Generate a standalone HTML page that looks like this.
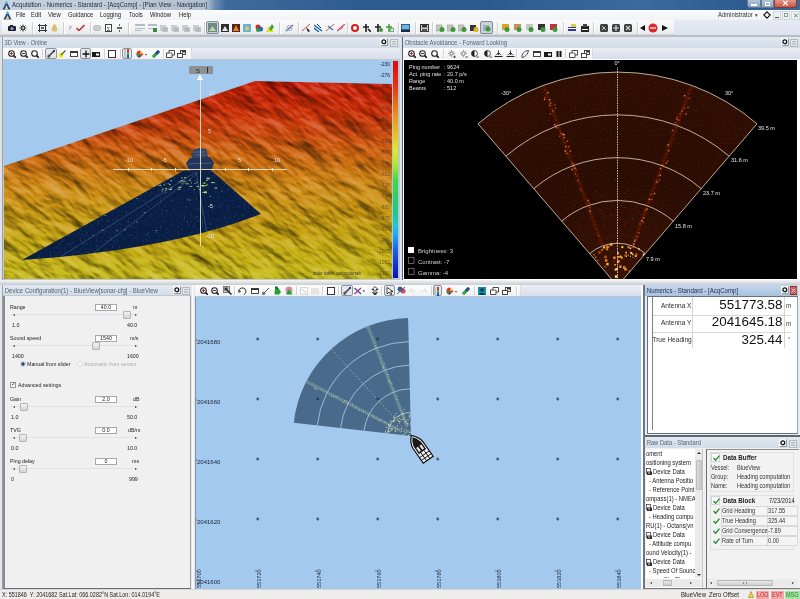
<!DOCTYPE html>
<html><head><meta charset="utf-8">
<style>
*{margin:0;padding:0;box-sizing:border-box}
html,body{width:800px;height:599px;overflow:hidden;background:#bcc3cc;font-family:"Liberation Sans",sans-serif;font-size:7px;color:#000;position:relative}
.a{position:absolute}
.t{white-space:nowrap;transform-origin:0 50%;line-height:8px}
.mn{top:11px;font-size:7px;color:#222;transform:scaleX(0.84)}
.ph{height:11px;background:linear-gradient(#e3e9f1,#d2dbe7);color:#52657b;line-height:12.5px;white-space:nowrap;overflow:hidden}
.ph span{display:inline-block;transform:scaleX(0.83);transform-origin:0 50%;padding-left:2px;font-size:7px}
.ptb{height:12px;background:linear-gradient(#eceef6,#d6dbe9)}
.tbw{height:11px;background:linear-gradient(#fdfdfd,#f0f1f3);border-right:1px solid #d8dce2}
#root{position:absolute;left:0;top:0;width:800px;height:599px;overflow:hidden;filter:blur(0.3px)}
</style></head><body><div id="root">

<!-- TITLE BAR -->
<div class="a" style="left:0;top:0;width:800px;height:10px;background:linear-gradient(90deg,#c6d2df 0%,#bccad9 15%,#b0c0d2 25.8%,#6f90b6 26.8%,#3e6a9b 28.2%,#2f5c8f 45%,#2c5a8c 60%,#3b6a9c 80%,#2e5c8f 93%,#3a6796 100%)"></div>
<svg class="a" style="left:2px;top:1px" width="9" height="9" viewBox="0 0 9 9"><path d="M0.5 8.5 L4.5 0.5 L8.5 8.5Z" fill="#1b3fa8"/><path d="M2.5 8.5 L4.5 4 L6.5 8.5Z" fill="#e8e04a"/><circle cx="4.5" cy="1.8" r="1.2" fill="#45c0c0"/></svg>
<div class="a t" style="left:12px;top:1px;font-size:7px;color:#1e2a38;transform:scaleX(0.865)">Acquisition - Numerics - Standard - [AcqComp] - [Plan View - Navigation]</div>
<div class="a" style="left:747px;top:0;width:14px;height:8px;background:linear-gradient(#b4c4d6,#8ea6c0);border:1px solid #5f7a9c;border-top:none;border-radius:0 0 0 3px"></div>
<div class="a" style="left:751px;top:4px;width:6px;height:2px;background:#fff"></div>
<div class="a" style="left:761px;top:0;width:13px;height:8px;background:linear-gradient(#b4c4d6,#8ea6c0);border:1px solid #5f7a9c;border-top:none"></div>
<div class="a" style="left:765px;top:2px;width:5px;height:4px;border:1px solid #fff"></div>
<div class="a" style="left:774px;top:0;width:23px;height:8px;background:linear-gradient(#e4968a,#c9574a);border:1px solid #8a3a32;border-top:none;border-radius:0 0 3px 0"></div>
<div class="a" style="left:782px;top:-1px;font-size:8px;font-weight:bold;color:#fff;line-height:9px">✕</div>

<!-- MENU BAR -->
<div class="a" style="left:0;top:10px;width:800px;height:10px;background:linear-gradient(#fafbfc,#f1f3f6)"></div>
<svg class="a" style="left:3px;top:11px" width="9" height="9" viewBox="0 0 9 9"><path d="M0.5 8.5 L4.5 0.5 L8.5 8.5Z" fill="#1b3fa8"/><path d="M2.5 8.5 L4.5 4 L6.5 8.5Z" fill="#e8e04a"/><circle cx="4.5" cy="1.8" r="1.2" fill="#45c0c0"/></svg>
<div class="a t mn" style="left:16px">File</div>
<div class="a t mn" style="left:31px">Edit</div>
<div class="a t mn" style="left:48px">View</div>
<div class="a t mn" style="left:68px">Guidance</div>
<div class="a t mn" style="left:100px">Logging</div>
<div class="a t mn" style="left:129px">Tools</div>
<div class="a t mn" style="left:150px">Window</div>
<div class="a t mn" style="left:179px">Help</div>
<div class="a t mn" style="left:718px;color:#333">Administrator <span style="font-size:5px">▼</span></div>
<svg class="a" style="left:763px;top:11px" width="8" height="8" viewBox="0 0 8 8"><path d="M4 0.8 L7.2 4 L4 7.2 L0.8 4Z" fill="#fff" stroke="#111" stroke-width="1.1"/></svg>
<div class="a" style="left:773px;top:11px;width:8px;height:9px;background:#eef1f4;border:1px solid #cfd6de"></div>
<div class="a" style="left:775px;top:17px;width:4px;height:1px;background:#555"></div>
<div class="a" style="left:782px;top:11px;width:8px;height:9px;background:#eef1f4;border:1px solid #cfd6de"></div>
<div class="a" style="left:784px;top:13px;width:4px;height:4px;border:1px solid #8a9"></div>
<div class="a" style="left:791px;top:11px;width:9px;height:9px;background:#eef1f4;border:1px solid #cfd6de;color:#5a8a7a;font-size:7px;line-height:7px;text-align:center">✕</div>

<!-- TOOLBAR -->
<div class="a" style="left:0;top:20px;width:800px;height:15px;background:linear-gradient(#e6eaf3,#dde2ee)"></div>
<div class="a" style="left:2px;top:20px;width:672px;height:15px;background:linear-gradient(#fbfbfb,#f2f2f2 60%,#e9eaec);border-bottom:1px solid #d4d7db"></div>
<div class="a" style="left:0;top:35px;width:800px;height:2px;background:#b9bec6"></div>

<svg class="a" style="left:8px;top:25px" width="8" height="6" viewBox="0 0 8 6"><rect x="0" y="1" width="8" height="5" rx="1" fill="#1c1f3a"/><circle cx="4" cy="3.5" r="1.6" fill="#9aa0c8"/><rect x="2" y="0" width="3" height="1.5" fill="#1c1f3a"/></svg>
<svg class="a" style="left:19px;top:24px" width="8" height="8" viewBox="0 0 8 8"><g stroke="#333" stroke-width="1"><path d="M4 0.5V7.5M0.5 4H7.5M1.5 1.5L6.5 6.5M6.5 1.5L1.5 6.5"/></g><circle cx="4" cy="4" r="1.5" fill="#eee" stroke="#333"/></svg>
<div class="a" style="left:32px;top:22px;width:1px;height:12px;background:#cdd0d4;box-shadow:1px 0 0 #fff"></div>
<svg class="a" style="left:38px;top:24px" width="9" height="8" viewBox="0 0 9 8"><g stroke="#333" stroke-width="1" fill="none"><path d="M0 1.5H9M0 6.5H9M1.5 0V8M7.5 0V8"/></g><rect x="3" y="3" width="3" height="2" fill="#5a6070"/></svg>
<svg class="a" style="left:51px;top:23px" width="7" height="9" viewBox="0 0 7 9"><path d="M3.5 0.5 L5 2.5 L6.5 6 L5.5 8.5 H1.5 L0.5 6 L2 2.5Z" fill="#d8bf7a"/></svg>
<div class="a" style="left:63px;top:22px;width:1px;height:12px;background:#cdd0d4;box-shadow:1px 0 0 #fff"></div>
<svg class="a" style="left:68px;top:25px" width="5" height="6" viewBox="0 0 5 6"><path d="M1 5 L4 1" stroke="#aab" stroke-width="1"/><circle cx="2" cy="2" r="1" fill="#bbc"/></svg>
<svg class="a" style="left:76px;top:24px" width="9" height="7" viewBox="0 0 9 7"><path d="M0.5 4 L3 6.5 L8.5 1" stroke="#c0344a" stroke-width="1.6" fill="none"/></svg>
<div class="a" style="left:90px;top:22px;width:1px;height:12px;background:#cdd0d4;box-shadow:1px 0 0 #fff"></div>
<svg class="a" style="left:93px;top:25px" width="8" height="6" viewBox="0 0 8 6"><rect x="0.5" y="0.5" width="7" height="5" rx="2" fill="#c8ccd0" stroke="#b8bcc0"/></svg>
<svg class="a" style="left:105px;top:24px" width="7" height="8" viewBox="0 0 7 8"><rect x="0.5" y="0.5" width="6" height="7" fill="#fff" stroke="#444"/><text x="3.5" y="6.5" font-size="6" text-anchor="middle" fill="#222" font-family="Liberation Serif">Σ</text></svg>
<svg class="a" style="left:117px;top:24px" width="5" height="8" viewBox="0 0 5 8"><g fill="#666"><rect x="2" y="0" width="1" height="2"/><rect x="0" y="3" width="5" height="2"/><rect x="2" y="6" width="1" height="2"/></g></svg>
<div class="a" style="left:128px;top:22px;width:1px;height:12px;background:#cdd0d4;box-shadow:1px 0 0 #fff"></div>
<svg class="a" style="left:135px;top:24px" width="10" height="8" viewBox="0 0 10 8"><g fill="#b0bccb"><rect x="0" y="0" width="10" height="2"/><rect x="0" y="4" width="10" height="1"/><rect x="0" y="6" width="7" height="1"/></g></svg>
<svg class="a" style="left:148px;top:24px" width="9" height="8" viewBox="0 0 9 8"><g fill="#b0bccb"><rect x="0" y="0" width="9" height="2"/><rect x="0" y="4" width="6" height="1"/></g><rect x="5" y="4" width="4" height="4" fill="#3b8a4a"/></svg>
<svg class="a" style="left:160px;top:24px" width="8" height="8" viewBox="0 0 8 8"><rect x="0" y="1" width="6" height="6" fill="#c8ccd0"/><rect x="2" y="3" width="6" height="5" fill="#b4b8bc" stroke="#ddd" stroke-width="0.5"/></svg>
<svg class="a" style="left:171px;top:24px" width="8" height="8" viewBox="0 0 8 8"><rect x="0" y="1" width="6" height="6" fill="#c8ccd0"/><rect x="2" y="3" width="6" height="5" fill="#b4b8bc" stroke="#ddd" stroke-width="0.5"/></svg>
<svg class="a" style="left:182px;top:24px" width="8" height="8" viewBox="0 0 8 8"><rect x="0" y="1" width="6" height="6" fill="#c8ccd0"/><rect x="2" y="3" width="6" height="5" fill="#b4b8bc" stroke="#ddd" stroke-width="0.5"/></svg>
<svg class="a" style="left:193px;top:24px" width="8" height="8" viewBox="0 0 8 8"><rect x="0" y="1" width="6" height="6" fill="#c8ccd0"/><rect x="2" y="3" width="6" height="5" fill="#b4b8bc" stroke="#ddd" stroke-width="0.5"/></svg>
<div class="a" style="left:204px;top:22px;width:1px;height:12px;background:#cdd0d4;box-shadow:1px 0 0 #fff"></div>
<div class="a" style="left:206px;top:21px;width:13px;height:13px;background:#c9d3db;border:1px solid #7f8a94;border-radius:2px"></div>
<svg class="a" style="left:208px;top:23px" width="9" height="9" viewBox="0 0 9 9"><rect x="0" y="0" width="9" height="9" fill="#6f8a7e"/><path d="M1 8 L4.5 3 L8 8Z" fill="#b8d8b0"/></svg>
<svg class="a" style="left:221px;top:24px" width="8" height="8" viewBox="0 0 8 8"><rect x="0" y="0" width="8" height="8" fill="#2a2f3a"/><path d="M1 7 L4 2 L7 7Z" fill="#e8e8d8"/></svg>
<svg class="a" style="left:232px;top:24px" width="8" height="8" viewBox="0 0 8 8"><rect x="0" y="0" width="8" height="8" fill="#5a2418"/><path d="M1 7 L4 1 L7 7Z" fill="#e8842a"/></svg>
<svg class="a" style="left:243px;top:24px" width="8" height="8" viewBox="0 0 8 8"><rect x="0" y="0" width="8" height="8" fill="#6ab0e0"/><circle cx="4" cy="4.5" r="2" fill="#e8d040"/></svg>
<svg class="a" style="left:255px;top:24px" width="8" height="8" viewBox="0 0 8 8"><circle cx="3" cy="3" r="2.5" fill="#d02828"/><circle cx="5.5" cy="5" r="2.5" fill="#2860c8"/><circle cx="3" cy="6" r="2" fill="#28a040"/></svg>
<svg class="a" style="left:266px;top:24px" width="8" height="8" viewBox="0 0 8 8"><path d="M0 8 L3 2 L8 8Z" fill="#e8e020"/><path d="M3 5 L6 0 L8 3 L5 7Z" fill="#38a838"/></svg>
<div class="a" style="left:279px;top:22px;width:1px;height:12px;background:#cdd0d4;box-shadow:1px 0 0 #fff"></div>
<svg class="a" style="left:285px;top:24px" width="9" height="8" viewBox="0 0 9 8"><path d="M1 7 L8 1" stroke="#5a70a8" stroke-width="1.5"/><circle cx="4.5" cy="4" r="2.5" fill="none" stroke="#9aa8c8"/></svg>
<div class="a" style="left:298px;top:22px;width:1px;height:12px;background:#cdd0d4;box-shadow:1px 0 0 #fff"></div>
<svg class="a" style="left:302px;top:24px" width="9" height="8" viewBox="0 0 9 8"><path d="M0 7 L8 0" stroke="#d05060" stroke-width="1"/><path d="M4 3 L8 7 L6 8Z" fill="#111"/></svg>
<svg class="a" style="left:314px;top:24px" width="9" height="8" viewBox="0 0 9 8"><path d="M0 1 L8 7M0 4 L5 8" stroke="#2a6ab0" stroke-width="1.5"/><path d="M3 0 L7 4" stroke="#1a3a80"/></svg>
<svg class="a" style="left:326px;top:24px" width="9" height="8" viewBox="0 0 9 8"><path d="M0 7 L8 0" stroke="#d05060" stroke-width="1"/><path d="M2 2 L7 6" stroke="#3a7ab8" stroke-width="1.6"/></svg>
<svg class="a" style="left:337px;top:24px" width="8" height="8" viewBox="0 0 8 8"><path d="M0 7 L8 0" stroke="#c84050" stroke-width="1.2"/><path d="M2 6 L6 3" stroke="#e07080" stroke-width="1.5"/></svg>
<div class="a" style="left:347px;top:22px;width:1px;height:12px;background:#cdd0d4;box-shadow:1px 0 0 #fff"></div>
<svg class="a" style="left:351px;top:24px" width="8" height="8" viewBox="0 0 8 8"><circle cx="4" cy="4" r="3" fill="none" stroke="#d02020" stroke-width="2"/></svg>
<svg class="a" style="left:363px;top:24px" width="8" height="8" viewBox="0 0 8 8"><path d="M3 0V8M0 3H6M5 5 L8 8" stroke="#222" stroke-width="1.6"/></svg>
<svg class="a" style="left:375px;top:24px" width="8" height="8" viewBox="0 0 8 8"><path d="M3 0V8M0 3H6" stroke="#222" stroke-width="1.6"/><circle cx="6" cy="6" r="2" fill="#3a9a3a"/></svg>
<svg class="a" style="left:386px;top:24px" width="8" height="8" viewBox="0 0 8 8"><path d="M3 0V8M0 3H6" stroke="#3a9a3a" stroke-width="1.4"/><circle cx="6" cy="6" r="2" fill="none" stroke="#3a9a3a"/></svg>
<div class="a" style="left:398px;top:22px;width:1px;height:12px;background:#cdd0d4;box-shadow:1px 0 0 #fff"></div>
<svg class="a" style="left:401px;top:24px" width="9" height="8" viewBox="0 0 9 8"><rect x="0" y="0" width="9" height="8" fill="#2a5f8f"/><rect x="1" y="1" width="7" height="4" fill="#6ab8e0"/><rect x="0" y="6" width="9" height="2" fill="#1a2a3a"/></svg>
<div class="a" style="left:415px;top:22px;width:1px;height:12px;background:#cdd0d4;box-shadow:1px 0 0 #fff"></div>
<svg class="a" style="left:420px;top:24px" width="9" height="8" viewBox="0 0 9 8"><rect x="0.5" y="0.5" width="8" height="7" fill="#d8d0c8" stroke="#333"/><rect x="2" y="0.5" width="5" height="3" fill="#333"/><rect x="2" y="5" width="5" height="2.5" fill="#555"/></svg>
<div class="a" style="left:432px;top:22px;width:1px;height:12px;background:#cdd0d4;box-shadow:1px 0 0 #fff"></div>
<svg class="a" style="left:436px;top:24px" width="9" height="8" viewBox="0 0 9 8"><rect x="0" y="1" width="6" height="6" fill="#c8c8c0" stroke="#888" stroke-width="0.5"/><circle cx="6" cy="5.5" r="2.5" fill="#3a9a3a"/></svg>
<svg class="a" style="left:447px;top:24px" width="9" height="8" viewBox="0 0 9 8"><rect x="0" y="1" width="6" height="6" fill="#c8c8c0" stroke="#888" stroke-width="0.5"/><circle cx="6" cy="5.5" r="2.5" fill="#3a9a3a"/></svg>
<svg class="a" style="left:458px;top:24px" width="9" height="8" viewBox="0 0 9 8"><rect x="0" y="1" width="6" height="6" fill="#c8c8c0" stroke="#888" stroke-width="0.5"/><circle cx="6" cy="5.5" r="2.5" fill="#3a9a3a"/></svg>
<svg class="a" style="left:470px;top:24px" width="9" height="8" viewBox="0 0 9 8"><rect x="0" y="1" width="6" height="6" fill="#333"/><circle cx="6" cy="5.5" r="2.5" fill="#e0b020"/></svg>
<svg class="a" style="left:482px;top:24px" width="9" height="8" viewBox="0 0 9 8"><rect x="0" y="1" width="6" height="6" fill="#c8c8c0" stroke="#888" stroke-width="0.5"/><circle cx="6" cy="5.5" r="2.5" fill="#3a9a3a"/></svg>
<div class="a" style="left:480px;top:21px;width:13px;height:13px;background:#c9d3db;border:1px solid #7f8a94;border-radius:2px"></div>
<svg class="a" style="left:483px;top:24px" width="8" height="8" viewBox="0 0 8 8"><rect x="0" y="1" width="6" height="6" fill="#aab"/><circle cx="5" cy="5" r="2.5" fill="#3a9a3a"/></svg>
<div class="a" style="left:497px;top:22px;width:1px;height:12px;background:#cdd0d4;box-shadow:1px 0 0 #fff"></div>
<svg class="a" style="left:502px;top:24px" width="8" height="8" viewBox="0 0 8 8"><rect x="0" y="0" width="7" height="6" fill="#e0a030"/><circle cx="5" cy="5.5" r="2.5" fill="#3a9a3a"/></svg>
<svg class="a" style="left:514px;top:24px" width="8" height="8" viewBox="0 0 8 8"><rect x="0" y="0" width="7" height="6" fill="#c09060"/><circle cx="5" cy="5.5" r="2.5" fill="#3a9a3a"/></svg>
<svg class="a" style="left:526px;top:24px" width="8" height="8" viewBox="0 0 8 8"><rect x="0" y="0" width="7" height="6" fill="#c8c8c0"/><circle cx="5" cy="5.5" r="2.5" fill="#3a9a3a"/></svg>
<svg class="a" style="left:538px;top:24px" width="8" height="8" viewBox="0 0 8 8"><rect x="0" y="0" width="7" height="6" fill="#333"/><circle cx="5" cy="5.5" r="2.5" fill="#3a9a3a"/></svg>
<svg class="a" style="left:550px;top:24px" width="8" height="8" viewBox="0 0 8 8"><rect x="0" y="0" width="7" height="6" fill="#c03040"/><circle cx="5" cy="5.5" r="2.5" fill="#3a9a3a"/></svg>
<div class="a" style="left:563px;top:22px;width:1px;height:12px;background:#cdd0d4;box-shadow:1px 0 0 #fff"></div>
<svg class="a" style="left:568px;top:24px" width="8" height="8" viewBox="0 0 8 8"><rect x="0" y="3" width="8" height="4" fill="#2a3aa8"/><rect x="0" y="4" width="8" height="1" fill="#fff"/><path d="M3 0 L8 0 L8 3 L3 3Z" fill="#e0d040"/></svg>
<svg class="a" style="left:581px;top:24px" width="8" height="8" viewBox="0 0 8 8"><rect x="0" y="2" width="8" height="6" fill="#222"/><rect x="2" y="0" width="4" height="3" fill="#444"/><rect x="1" y="5" width="6" height="1" fill="#fff"/></svg>
<div class="a" style="left:593px;top:22px;width:1px;height:12px;background:#cdd0d4;box-shadow:1px 0 0 #fff"></div>
<svg class="a" style="left:600px;top:24px" width="8" height="8" viewBox="0 0 8 8"><rect x="0" y="0" width="8" height="8" rx="1.5" fill="#3c3e42"/><path d="M2 2 L6 6M2 6 L5 3" stroke="#ccc"/></svg>
<svg class="a" style="left:612px;top:24px" width="8" height="8" viewBox="0 0 8 8"><rect x="0" y="0" width="8" height="8" rx="1.5" fill="#3c3e42"/><path d="M4 1V7M1 4H7" stroke="#ddd" stroke-width="1.2"/></svg>
<svg class="a" style="left:624px;top:24px" width="8" height="8" viewBox="0 0 8 8"><rect x="0" y="0" width="8" height="8" rx="1.5" fill="#3c3e42"/><path d="M2 2 L6 6M6 2 L2 6" stroke="#ccc" stroke-width="1.2"/></svg>
<div class="a" style="left:637px;top:22px;width:1px;height:12px;background:#cdd0d4;box-shadow:1px 0 0 #fff"></div>
<svg class="a" style="left:640px;top:25px" width="5" height="6" viewBox="0 0 5 6"><path d="M5 0 L0 3 L5 6Z" fill="#111"/></svg>
<svg class="a" style="left:648px;top:23px" width="10" height="10" viewBox="0 0 10 10"><circle cx="5" cy="5" r="4.5" fill="#d82a2a"/><rect x="2" y="4" width="6" height="2" fill="#f8a0a0"/></svg>
<svg class="a" style="left:662px;top:25px" width="6" height="6" viewBox="0 0 6 6"><path d="M0 0 L6 3 L0 6Z" fill="#111"/></svg>

<!-- frame bg -->
<div class="a" style="left:0;top:37px;width:800px;height:553px;background:#dfe2e6"></div>
<!-- 3D view panel -->
<div class="a" style="left:2px;top:37px;width:1px;height:243px;background:#98a2ae"></div>
<div class="a ph" style="left:3px;top:37px;width:397px"><span style="transform:scaleX(0.81)">3D View - Online</span></div>
<div class="a ptb" style="left:3px;top:48px;width:397px"></div><div class="a tbw" style="left:3px;top:48px;width:189px"></div>
<div class="a" style="left:3px;top:59px;width:397px;height:221px;background:#fff;border:1px solid #c4c8cc"></div>
<div class="a" style="left:402px;top:37px;width:1px;height:243px;background:#5a646e"></div>

<!-- Obstacle panel -->
<div class="a ph" style="left:403px;top:37px;width:397px"><span style="transform:scaleX(0.852)">Obstacle Avoidance - Forward Looking</span></div>
<div class="a ptb" style="left:403px;top:48px;width:397px"></div><div class="a tbw" style="left:403px;top:48px;width:190px"></div>
<div class="a" style="left:403px;top:59px;width:397px;height:221px;background:#fff"></div>
<div class="a" style="left:0;top:280px;width:800px;height:5px;background:linear-gradient(#f4f5f6,#c6cbd1)"></div>

<!-- Device config -->
<div class="a" style="left:0;top:285px;width:3px;height:305px;background:linear-gradient(90deg,#e4e6ea 0,#e4e6ea 2px,#9aa0a8 2px)"></div>
<div class="a ph" style="left:3px;top:285px;width:188px"><span style="transform:scaleX(0.865)">Device Configuration(1) - BlueView[sonar-cfg] - BlueView</span></div>
<div class="a" style="left:3px;top:295px;width:188px;height:1px;background:#c0c8d2"></div>
<div class="a" style="left:3px;top:296px;width:188px;height:293px;background:#f0f0f0;border-left:2px solid #868b92;border-right:1px solid #9aa0a6;border-bottom:1px solid #6b7076"></div>
<div class="a" style="left:191px;top:285px;width:4px;height:305px;background:linear-gradient(90deg,#dfe3e8,#fff 50%,#d8dde3)"></div>

<!-- Plan view -->
<div class="a ptb" style="left:195px;top:285px;width:446px"></div><div class="a tbw" style="left:195px;top:285px;width:326px"></div>
<div class="a" style="left:195px;top:296px;width:446px;height:293px;background:#a6caf0;border-top:1px solid #b8c4d0"></div>
<div class="a" style="left:641px;top:285px;width:2px;height:305px;background:#fff"></div>
<div class="a" style="left:643px;top:285px;width:2px;height:305px;background:#6e7680"></div>

<!-- Numerics -->
<div class="a ph" style="left:645px;top:285px;width:153px;background:linear-gradient(#c4d6ec,#a9c1de);color:#1c2c4e"><span style="transform:scaleX(0.87)">Numerics - Standard - [AcqComp]</span></div>
<div class="a" style="left:645px;top:296px;width:155px;height:139px;background:#e4f0f8"></div>
<div class="a" style="left:647px;top:296px;width:151px;height:138px;background:#fff;border-top:1px solid #6a7078;border-left:1px solid #6a7078;border-right:1px solid #98a0a8;border-bottom:1px solid #6a7078"></div>
<div class="a" style="left:652px;top:297px;width:1px;height:133px;background:#7a7f86"></div>

<!-- Raw data -->
<div class="a" style="left:645px;top:435px;width:155px;height:2px;background:#5e666e"></div>
<div class="a ph" style="left:645px;top:437px;width:155px"><span>Raw Data - Standard</span></div>
<div class="a" style="left:645px;top:448px;width:155px;height:141px;background:#f0f0f0;border-bottom:1px solid #777"></div>

<!-- status -->
<div class="a" style="left:0;top:589px;width:800px;height:1px;background:#d6d6d6"></div>
<div class="a" style="left:0;top:590px;width:800px;height:9px;background:#efecec"></div>

<svg class="a" style="left:4px;top:60px" width="395" height="219" viewBox="4 60 395 219">
<defs>
<linearGradient id="terr" gradientUnits="userSpaceOnUse" x1="300" y1="70" x2="300" y2="279">
<stop offset="0" stop-color="#c81806"/>
<stop offset="0.2" stop-color="#cc3008"/>
<stop offset="0.3" stop-color="#d04a0e"/>
<stop offset="0.4" stop-color="#d06610"/>
<stop offset="0.52" stop-color="#d08414"/>
<stop offset="0.67" stop-color="#cc9a14"/>
<stop offset="0.84" stop-color="#c8ac14"/>
<stop offset="1" stop-color="#c8bc1c"/>
</linearGradient>
<linearGradient id="cbar" x1="0" y1="0" x2="0" y2="1">
<stop offset="0" stop-color="#e00808"/>
<stop offset="0.11" stop-color="#e83010"/>
<stop offset="0.18" stop-color="#f06010"/>
<stop offset="0.25" stop-color="#f09010"/>
<stop offset="0.34" stop-color="#f0c010"/>
<stop offset="0.41" stop-color="#e8e820"/>
<stop offset="0.48" stop-color="#b0e820"/>
<stop offset="0.55" stop-color="#40d840"/>
<stop offset="0.69" stop-color="#20c880"/>
<stop offset="0.76" stop-color="#20c8d0"/>
<stop offset="0.80" stop-color="#20a8f0"/>
<stop offset="0.87" stop-color="#2060e0"/>
<stop offset="1" stop-color="#1010b0"/>
</linearGradient>
<filter id="rough" x="0" y="0" width="1" height="1" filterUnits="objectBoundingBox" color-interpolation-filters="sRGB">
<feTurbulence type="fractalNoise" baseFrequency="0.022 0.055" numOctaves="4" seed="11" result="n"/>
<feDiffuseLighting in="n" surfaceScale="3.8" diffuseConstant="0.62" lighting-color="#ffffff" result="l"><feDistantLight azimuth="250" elevation="50"/></feDiffuseLighting>
</filter>
<filter id="fanspk" x="0" y="0" width="1" height="1"><feTurbulence type="fractalNoise" baseFrequency="0.5 0.35" numOctaves="2" seed="4" result="n"/><feColorMatrix in="n" type="matrix" values="0 0 0 0 0.25  0 0 0 0 0.38  0 0 0 0 0.55  2.2 0 0 0 -1.2"/></filter>
<clipPath id="tclip"><path d="M4 166 L255 81 L392 84 L392 279 L4 279Z"/></clipPath>
</defs>
<rect x="4" y="60" width="395" height="219" fill="#a4c9ef"/>
<g clip-path="url(#tclip)"><path d="M4 166 L255 81 L392 84 L392 279 L4 279Z" fill="url(#terr)"/><g transform="rotate(36 200 180)" style="mix-blend-mode:hard-light"><rect x="-200" y="-150" width="800" height="650" filter="url(#rough)"/></g></g>
<!-- fan -->
<clipPath id="fan3c"><path d="M184 170.5 L212 171 L261 214 Q170 250 22 260Z"/></clipPath>
<path d="M184 170.5 L212 171 L261 214 Q170 250 22 260Z" fill="#091e44"/>
<g clip-path="url(#fan3c)"><rect x="20" y="168" width="245" height="95" filter="url(#fanspk)" opacity="0.3"/>
<path d="M60 257 L196 172 M92 254 L198 173" stroke="#4a6a8a" stroke-width="0.7" fill="none" opacity="0.8"/>
<path d="M196 172 L210 250" stroke="#6a8aaa" stroke-width="0.7" opacity="0.6"/>
<rect x="202.1" y="191.9" width="2" height="1" fill="#90b8a0" opacity="0.85"/>
<rect x="221.8" y="168.9" width="3" height="1" fill="#a8d060" opacity="0.85"/>
<rect x="168.9" y="183.9" width="1" height="1" fill="#c8e070" opacity="0.85"/>
<rect x="164.9" y="189.8" width="1" height="1" fill="#a8d060" opacity="0.85"/>
<rect x="189.3" y="179.8" width="1.5" height="1" fill="#c8e070" opacity="0.85"/>
<rect x="118.5" y="191.6" width="3" height="1" fill="#90b8a0" opacity="0.85"/>
<rect x="204.2" y="185.1" width="3" height="1" fill="#c8e070" opacity="0.85"/>
<rect x="154.2" y="172.6" width="1" height="1" fill="#a8d060" opacity="0.85"/>
<rect x="184.5" y="181.4" width="1" height="1" fill="#90b8a0" opacity="0.85"/>
<rect x="203.8" y="192.2" width="3" height="1" fill="#90b8a0" opacity="0.85"/>
<rect x="203.9" y="191.2" width="3" height="1" fill="#a8d060" opacity="0.85"/>
<rect x="198.0" y="185.8" width="1" height="1" fill="#c8e070" opacity="0.85"/>
<rect x="158.8" y="181.2" width="3" height="1" fill="#a8d060" opacity="0.85"/>
<rect x="178.3" y="186.8" width="3" height="1" fill="#e0f0a0" opacity="0.85"/>
<rect x="169.0" y="188.9" width="3" height="1" fill="#e0f0a0" opacity="0.85"/>
<rect x="206.7" y="183.8" width="1" height="1" fill="#c8e070" opacity="0.85"/>
<rect x="203.9" y="192.0" width="3" height="1" fill="#c8e070" opacity="0.85"/>
<rect x="157.2" y="184.4" width="1.5" height="1" fill="#e0f0a0" opacity="0.85"/>
<rect x="156.2" y="181.1" width="1.5" height="1" fill="#a8d060" opacity="0.85"/>
<rect x="155.8" y="175.9" width="2" height="1" fill="#e0f0a0" opacity="0.85"/>
<rect x="188.8" y="170.2" width="1.5" height="1" fill="#c8e070" opacity="0.85"/>
<rect x="209.4" y="195.9" width="1.5" height="1" fill="#90b8a0" opacity="0.85"/>
<rect x="161.4" y="190.4" width="1.5" height="1" fill="#90b8a0" opacity="0.85"/>
<rect x="196.4" y="182.2" width="1" height="1" fill="#e0f0a0" opacity="0.85"/>
<rect x="163.7" y="184.3" width="1.5" height="1" fill="#a8d060" opacity="0.85"/>
<rect x="189.4" y="185.9" width="3" height="1" fill="#90b8a0" opacity="0.85"/>
<rect x="202.0" y="185.7" width="2" height="1" fill="#e0f0a0" opacity="0.85"/>
<rect x="201.2" y="185.0" width="3" height="1" fill="#c8e070" opacity="0.85"/>
<rect x="206.7" y="177.7" width="1.5" height="1" fill="#a8d060" opacity="0.85"/>
<rect x="184.3" y="177.2" width="2" height="1" fill="#a8d060" opacity="0.85"/>
<rect x="211.0" y="182.1" width="3" height="1" fill="#c8e070" opacity="0.85"/>
<rect x="230.1" y="180.2" width="2" height="1" fill="#a8d060" opacity="0.85"/>
<rect x="206.9" y="178.5" width="3" height="1" fill="#90b8a0" opacity="0.85"/>
<rect x="147.6" y="178.3" width="2" height="1" fill="#a8d060" opacity="0.85"/>
<rect x="167.7" y="183.0" width="1" height="1" fill="#90b8a0" opacity="0.85"/>
<rect x="163.4" y="170.3" width="1" height="1" fill="#e0f0a0" opacity="0.85"/>
<rect x="158.7" y="179.2" width="3" height="1" fill="#e0f0a0" opacity="0.85"/>
<rect x="170.0" y="174.9" width="1.5" height="1" fill="#a8d060" opacity="0.85"/>
<rect x="198.9" y="188.7" width="1.5" height="1" fill="#c8e070" opacity="0.85"/>
<rect x="160.7" y="175.8" width="1" height="1" fill="#c8e070" opacity="0.85"/>
<rect x="178.6" y="181.4" width="2" height="1" fill="#90b8a0" opacity="0.85"/>
<rect x="169.5" y="184.2" width="1.5" height="1" fill="#a8d060" opacity="0.85"/>
<rect x="193.6" y="189.3" width="1" height="1" fill="#c8e070" opacity="0.85"/>
<rect x="185.7" y="183.3" width="3" height="1" fill="#c8e070" opacity="0.85"/>
<rect x="162.2" y="188.6" width="1.5" height="1" fill="#e0f0a0" opacity="0.85"/>
<rect x="214.2" y="182.2" width="1" height="1" fill="#a8d060" opacity="0.85"/>
<rect x="170.5" y="187.3" width="2" height="1" fill="#90b8a0" opacity="0.85"/>
<rect x="194.5" y="183.1" width="1" height="1" fill="#e0f0a0" opacity="0.85"/>
<rect x="203.6" y="182.9" width="1.5" height="1" fill="#c8e070" opacity="0.85"/>
<rect x="170.5" y="180.4" width="1.5" height="1" fill="#e0f0a0" opacity="0.85"/>
<rect x="214.5" y="187.5" width="3" height="1" fill="#c8e070" opacity="0.85"/>
<rect x="206.6" y="177.6" width="3" height="1" fill="#c8e070" opacity="0.85"/>
<rect x="170.3" y="175.5" width="3" height="1" fill="#90b8a0" opacity="0.85"/>
<rect x="191.0" y="182.4" width="1" height="1" fill="#c8e070" opacity="0.85"/>
<rect x="181.6" y="182.5" width="2" height="1" fill="#90b8a0" opacity="0.85"/>
<rect x="181.0" y="177.5" width="1.5" height="1" fill="#90b8a0" opacity="0.85"/>
<rect x="165.9" y="188.6" width="1" height="1" fill="#c8e070" opacity="0.85"/>
<rect x="159.6" y="184.9" width="1.5" height="1" fill="#90b8a0" opacity="0.85"/>
<rect x="159.1" y="176.8" width="2" height="1" fill="#a8d060" opacity="0.85"/>
<rect x="159.3" y="184.8" width="2" height="1" fill="#90b8a0" opacity="0.85"/>
<rect x="210.7" y="170.2" width="1" height="1" fill="#a8d060" opacity="0.85"/>
<rect x="177.7" y="188.8" width="3" height="1" fill="#a8d060" opacity="0.85"/>
<rect x="196.5" y="186.0" width="2" height="1" fill="#90b8a0" opacity="0.85"/>
<rect x="183.8" y="177.3" width="1" height="1" fill="#a8d060" opacity="0.85"/>
<rect x="180.7" y="180.1" width="2" height="1" fill="#e0f0a0" opacity="0.85"/>
<rect x="164.0" y="176.9" width="2" height="1" fill="#c8e070" opacity="0.85"/>
<rect x="203.5" y="182.4" width="2" height="1" fill="#a8d060" opacity="0.85"/>
<rect x="206.1" y="179.8" width="1.5" height="1" fill="#e0f0a0" opacity="0.85"/>
<rect x="182.3" y="180.6" width="3" height="1" fill="#90b8a0" opacity="0.85"/>
<rect x="165.1" y="187.9" width="2" height="1" fill="#a8d060" opacity="0.85"/>
<rect x="186.8" y="221.1" width="1" height="1" fill="#8ab0c8" opacity="0.6"/>
<rect x="110.2" y="238.0" width="1" height="1" fill="#8ab0c8" opacity="0.6"/>
<rect x="136.1" y="221.5" width="2" height="1" fill="#8ab0c8" opacity="0.6"/>
<rect x="83.0" y="215.1" width="1" height="1" fill="#8ab0c8" opacity="0.6"/>
<rect x="143.7" y="212.1" width="2" height="1" fill="#8ab0c8" opacity="0.6"/>
<rect x="118.4" y="190.4" width="1" height="1" fill="#8ab0c8" opacity="0.6"/>
<rect x="95.1" y="205.4" width="2" height="1" fill="#8ab0c8" opacity="0.6"/>
<rect x="139.3" y="190.1" width="1" height="1" fill="#8ab0c8" opacity="0.6"/>
<rect x="101.6" y="229.6" width="2" height="1" fill="#8ab0c8" opacity="0.6"/>
<rect x="164.7" y="192.5" width="1" height="1" fill="#8ab0c8" opacity="0.6"/>
<rect x="146.7" y="234.1" width="1" height="1" fill="#8ab0c8" opacity="0.6"/>
<rect x="116.0" y="230.1" width="2" height="1" fill="#8ab0c8" opacity="0.6"/>
<rect x="221.4" y="190.9" width="1" height="1" fill="#8ab0c8" opacity="0.6"/>
<rect x="92.9" y="235.0" width="1" height="1" fill="#8ab0c8" opacity="0.6"/>
<rect x="104.3" y="214.9" width="2" height="1" fill="#8ab0c8" opacity="0.6"/>
<rect x="155.4" y="230.0" width="2" height="1" fill="#8ab0c8" opacity="0.6"/>
<rect x="104.4" y="197.7" width="2" height="1" fill="#8ab0c8" opacity="0.6"/>
<rect x="127.7" y="221.4" width="1" height="1" fill="#8ab0c8" opacity="0.6"/>
<rect x="186.9" y="199.3" width="1" height="1" fill="#8ab0c8" opacity="0.6"/>
<rect x="188.5" y="199.5" width="2" height="1" fill="#8ab0c8" opacity="0.6"/>
<rect x="136.4" y="198.1" width="2" height="1" fill="#8ab0c8" opacity="0.6"/>
<rect x="124.0" y="229.5" width="2" height="1" fill="#8ab0c8" opacity="0.6"/>
<rect x="105.3" y="195.2" width="2" height="1" fill="#8ab0c8" opacity="0.6"/>
<rect x="166.2" y="210.4" width="1" height="1" fill="#8ab0c8" opacity="0.6"/>
<rect x="196.5" y="216.2" width="1" height="1" fill="#8ab0c8" opacity="0.6"/>
</g>
<!-- boat -->
<path d="M186 163 L190 158 L210 157 L214 163 L211 171 L190 172Z" fill="#22345a"/>
<path d="M192 158 L193 150 L199 148 L206 149 L208 157Z" fill="#2e4468"/>
<path d="M194 152 L205 152 M195 155 L206 155" stroke="#5a7498" stroke-width="0.8"/>
<path d="M188 164 L212 163" stroke="#4a6088" stroke-width="0.9"/>
<path d="M190 171 L211 170" stroke="#0c1a34" stroke-width="1.2"/>
<!-- axes -->
<path d="M113 169.5 H287 M200.5 78 V246" stroke="#ece6c8" stroke-width="1" opacity="0.9"/><g fill="#f4f0d8"><rect x="128" y="168" width="1" height="3"/><rect x="151" y="168" width="1" height="3"/><rect x="175" y="168" width="1" height="3"/><rect x="225" y="168" width="1" height="3"/><rect x="248" y="168" width="1" height="3"/><rect x="272" y="168" width="1" height="3"/></g>
<path d="M197 80 L200 74 L203 80Z" fill="#fff"/>
<rect x="189" y="66" width="24" height="8" rx="1" fill="#8d9196"/>
<text x="196" y="72.5" font-size="6" fill="#222">S</text><rect x="207" y="67" width="1" height="6" fill="#333"/>
<g font-size="5.5" fill="#e8e8e8" font-family="Liberation Sans"><text x="125" y="162">-10</text><text x="162" y="162">-5</text><text x="238" y="162">5</text><text x="274" y="162">10</text><text x="208" y="133">5</text><text x="209" y="95">10</text><text x="208" y="208">-5</text><text x="206" y="238">-10</text></g>
<!-- color bar -->
<rect x="393" y="61" width="5" height="217" fill="url(#cbar)"/>
<g font-size="5" fill="#223" text-anchor="end" font-family="Liberation Sans"><text x="390" y="66">-230</text><text x="390" y="77">-276</text></g>
<g font-size="5" fill="#432" text-anchor="end" font-family="Liberation Sans" opacity="0.7"><text x="390" y="88">-322</text><text x="390" y="99">-369</text><text x="390" y="110">-415</text><text x="390" y="121">-461</text><text x="390" y="132">-507</text><text x="390" y="143">-553</text><text x="390" y="154">-599</text><text x="390" y="165">-645</text><text x="390" y="176">-692</text><text x="390" y="187">-738</text><text x="390" y="198">-784</text><text x="390" y="209">-830</text><text x="390" y="220">-876</text><text x="390" y="231">-924</text><text x="390" y="242">-969</text><text x="390" y="253">-1015</text><text x="390" y="264">-1062</text><text x="390" y="275">-1155</text></g>
<text x="313" y="275" font-size="4.5" fill="#333" font-family="Liberation Sans">color table: autocolortab</text>
</svg>

<svg class="a" style="left:404px;top:60px" width="393" height="219" viewBox="404 60 393 219">
<defs><radialGradient id="fanfill" gradientUnits="userSpaceOnUse" cx="617.5" cy="286" r="214"><stop offset="0" stop-color="#3a1204"/><stop offset="0.5" stop-color="#2a0c03"/><stop offset="1" stop-color="#2e0d03"/></radialGradient>
<filter id="spk" x="0" y="0" width="1" height="1"><feTurbulence type="fractalNoise" baseFrequency="0.6" numOctaves="1" seed="5" result="n"/><feColorMatrix in="n" type="matrix" values="0 0 0 0 0.6  0 0 0 0 0.25  0 0 0 0 0.05  3 0 0 0 -1.7"/></filter>
<clipPath id="fanclip"><path d="M617.5 286.0 L478.0 123.8 A214.0 214.0 0 0 1 757.0 123.8Z"/></clipPath></defs>
<rect x="404" y="60" width="393" height="219" fill="#000"/>
<path d="M617.5 286.0 L478.0 123.8 A214.0 214.0 0 0 1 757.0 123.8Z" fill="url(#fanfill)"/>
<g clip-path="url(#fanclip)">
<rect x="404" y="60" width="393" height="219" filter="url(#spk)" opacity="0.18"/>
<line x1="603.6" y1="248.5" x2="543.3" y2="85.3" stroke="#5a1604" stroke-width="5" opacity="0.4"/>
<line x1="603.6" y1="248.5" x2="543.3" y2="85.3" stroke="#b03810" stroke-width="1.6" opacity="0.35" stroke-dasharray="2 2"/>
<rect x="589.4" y="210.6" width="1.5" height="1.5" fill="#f0a060" opacity="0.8"/>
<rect x="549.8" y="102.4" width="1.5" height="1.5" fill="#e07030" opacity="0.8"/>
<rect x="565.6" y="152.8" width="1.5" height="1.5" fill="#c04010" opacity="0.8"/>
<rect x="589.2" y="206.8" width="1.5" height="1.5" fill="#c04010" opacity="0.8"/>
<rect x="571.5" y="162.3" width="1.5" height="1.5" fill="#c04010" opacity="0.8"/>
<rect x="568.0" y="145.9" width="1.5" height="1.5" fill="#d05020" opacity="0.8"/>
<rect x="552.3" y="110.1" width="1.5" height="1.5" fill="#e07030" opacity="0.8"/>
<rect x="566.7" y="140.5" width="1.5" height="1.5" fill="#e07030" opacity="0.8"/>
<rect x="587.5" y="199.8" width="1.5" height="1.5" fill="#f0a060" opacity="0.8"/>
<rect x="574.7" y="173.5" width="1.5" height="1.5" fill="#c04010" opacity="0.8"/>
<rect x="558.8" y="135.6" width="1.5" height="1.5" fill="#c04010" opacity="0.8"/>
<rect x="560.2" y="132.6" width="1.5" height="1.5" fill="#d05020" opacity="0.8"/>
<rect x="554.8" y="107.3" width="1.5" height="1.5" fill="#d05020" opacity="0.8"/>
<rect x="575.6" y="169.1" width="1.5" height="1.5" fill="#c04010" opacity="0.8"/>
<rect x="555.3" y="125.2" width="1.5" height="1.5" fill="#c04010" opacity="0.8"/>
<rect x="574.3" y="167.4" width="1.5" height="1.5" fill="#f0a060" opacity="0.8"/>
<rect x="572.6" y="163.2" width="1.5" height="1.5" fill="#d05020" opacity="0.8"/>
<rect x="548.9" y="104.8" width="1.5" height="1.5" fill="#e07030" opacity="0.8"/>
<rect x="549.5" y="113.3" width="1.5" height="1.5" fill="#d05020" opacity="0.8"/>
<rect x="563.5" y="136.7" width="1.5" height="1.5" fill="#e07030" opacity="0.8"/>
<rect x="563.4" y="134.0" width="1.5" height="1.5" fill="#f0a060" opacity="0.8"/>
<rect x="588.3" y="202.5" width="1.5" height="1.5" fill="#c04010" opacity="0.8"/>
<rect x="597.8" y="234.6" width="1.5" height="1.5" fill="#c04010" opacity="0.8"/>
<rect x="554.4" y="104.1" width="1.5" height="1.5" fill="#c04010" opacity="0.8"/>
<rect x="555.8" y="126.9" width="1.5" height="1.5" fill="#e07030" opacity="0.8"/>
<rect x="566.5" y="152.6" width="1.5" height="1.5" fill="#c04010" opacity="0.8"/>
<rect x="562.3" y="133.5" width="1.5" height="1.5" fill="#f0a060" opacity="0.8"/>
<rect x="571.4" y="168.8" width="1.5" height="1.5" fill="#f0a060" opacity="0.8"/>
<rect x="603.8" y="247.1" width="1.5" height="1.5" fill="#e07030" opacity="0.8"/>
<rect x="543.9" y="98.6" width="1.5" height="1.5" fill="#f0a060" opacity="0.8"/>
<rect x="569.6" y="150.4" width="1.5" height="1.5" fill="#e07030" opacity="0.8"/>
<rect x="547.1" y="91.8" width="1.5" height="1.5" fill="#f0a060" opacity="0.8"/>
<rect x="543.9" y="96.8" width="1.5" height="1.5" fill="#c04010" opacity="0.8"/>
<rect x="579.9" y="189.0" width="1.5" height="1.5" fill="#c04010" opacity="0.8"/>
<rect x="565.1" y="146.0" width="1.5" height="1.5" fill="#e07030" opacity="0.8"/>
<rect x="564.5" y="150.6" width="1.5" height="1.5" fill="#f0a060" opacity="0.8"/>
<rect x="577.2" y="180.1" width="1.5" height="1.5" fill="#d05020" opacity="0.8"/>
<rect x="548.9" y="99.0" width="1.5" height="1.5" fill="#f0a060" opacity="0.8"/>
<rect x="572.6" y="165.5" width="1.5" height="1.5" fill="#e07030" opacity="0.8"/>
<rect x="553.8" y="124.0" width="1.5" height="1.5" fill="#f0a060" opacity="0.8"/>
<line x1="631.4" y1="248.5" x2="691.7" y2="85.3" stroke="#5a1604" stroke-width="5" opacity="0.4"/>
<line x1="631.4" y1="248.5" x2="691.7" y2="85.3" stroke="#b03810" stroke-width="1.6" opacity="0.35" stroke-dasharray="2 2"/>
<rect x="632.8" y="245.4" width="1.5" height="1.5" fill="#d05020" opacity="0.8"/>
<rect x="635.2" y="239.0" width="1.5" height="1.5" fill="#c04010" opacity="0.8"/>
<rect x="653.8" y="192.8" width="1.5" height="1.5" fill="#f0a060" opacity="0.8"/>
<rect x="671.8" y="129.7" width="1.5" height="1.5" fill="#e07030" opacity="0.8"/>
<rect x="683.9" y="94.9" width="1.5" height="1.5" fill="#f0a060" opacity="0.8"/>
<rect x="646.0" y="208.4" width="1.5" height="1.5" fill="#f0a060" opacity="0.8"/>
<rect x="641.0" y="219.9" width="1.5" height="1.5" fill="#f0a060" opacity="0.8"/>
<rect x="679.4" y="113.3" width="1.5" height="1.5" fill="#c04010" opacity="0.8"/>
<rect x="638.3" y="232.0" width="1.5" height="1.5" fill="#d05020" opacity="0.8"/>
<rect x="648.6" y="198.7" width="1.5" height="1.5" fill="#f0a060" opacity="0.8"/>
<rect x="644.5" y="210.1" width="1.5" height="1.5" fill="#c04010" opacity="0.8"/>
<rect x="667.3" y="144.1" width="1.5" height="1.5" fill="#f0a060" opacity="0.8"/>
<rect x="688.7" y="97.7" width="1.5" height="1.5" fill="#d05020" opacity="0.8"/>
<rect x="658.8" y="179.2" width="1.5" height="1.5" fill="#d05020" opacity="0.8"/>
<rect x="636.6" y="235.9" width="1.5" height="1.5" fill="#d05020" opacity="0.8"/>
<rect x="683.2" y="107.3" width="1.5" height="1.5" fill="#d05020" opacity="0.8"/>
<rect x="674.6" y="121.9" width="1.5" height="1.5" fill="#d05020" opacity="0.8"/>
<rect x="651.2" y="198.7" width="1.5" height="1.5" fill="#d05020" opacity="0.8"/>
<rect x="681.1" y="110.3" width="1.5" height="1.5" fill="#e07030" opacity="0.8"/>
<rect x="677.9" y="119.5" width="1.5" height="1.5" fill="#d05020" opacity="0.8"/>
<rect x="656.3" y="181.3" width="1.5" height="1.5" fill="#f0a060" opacity="0.8"/>
<rect x="659.4" y="174.6" width="1.5" height="1.5" fill="#f0a060" opacity="0.8"/>
<rect x="655.7" y="181.4" width="1.5" height="1.5" fill="#c04010" opacity="0.8"/>
<rect x="639.3" y="223.1" width="1.5" height="1.5" fill="#c04010" opacity="0.8"/>
<rect x="666.9" y="160.4" width="1.5" height="1.5" fill="#d05020" opacity="0.8"/>
<rect x="633.2" y="243.3" width="1.5" height="1.5" fill="#f0a060" opacity="0.8"/>
<rect x="665.5" y="162.5" width="1.5" height="1.5" fill="#e07030" opacity="0.8"/>
<rect x="685.4" y="113.0" width="1.5" height="1.5" fill="#e07030" opacity="0.8"/>
<rect x="676.0" y="118.2" width="1.5" height="1.5" fill="#d05020" opacity="0.8"/>
<rect x="687.3" y="106.7" width="1.5" height="1.5" fill="#e07030" opacity="0.8"/>
<rect x="632.6" y="246.5" width="1.5" height="1.5" fill="#d05020" opacity="0.8"/>
<rect x="659.8" y="167.8" width="1.5" height="1.5" fill="#e07030" opacity="0.8"/>
<rect x="661.9" y="164.6" width="1.5" height="1.5" fill="#e07030" opacity="0.8"/>
<rect x="650.6" y="193.7" width="1.5" height="1.5" fill="#c04010" opacity="0.8"/>
<rect x="676.2" y="118.0" width="1.5" height="1.5" fill="#d05020" opacity="0.8"/>
<rect x="643.1" y="217.1" width="1.5" height="1.5" fill="#e07030" opacity="0.8"/>
<rect x="642.3" y="221.5" width="1.5" height="1.5" fill="#d05020" opacity="0.8"/>
<rect x="676.5" y="115.9" width="1.5" height="1.5" fill="#c04010" opacity="0.8"/>
<rect x="633.9" y="240.4" width="1.5" height="1.5" fill="#f0a060" opacity="0.8"/>
<rect x="667.9" y="150.0" width="1.5" height="1.5" fill="#e07030" opacity="0.8"/>
<rect x="630.0" y="255.7" width="1" height="1" fill="#ffd040"/>
<rect x="593.6" y="254.3" width="1" height="1" fill="#ffd040"/>
<rect x="597.2" y="260.0" width="1" height="1" fill="#e09030"/>
<rect x="617.0" y="252.2" width="2" height="2" fill="#ffb020"/>
<rect x="614.6" y="268.6" width="2" height="2" fill="#ffe080"/>
<rect x="604.9" y="259.2" width="2.5" height="2.5" fill="#f08020"/>
<rect x="619.1" y="265.4" width="2.5" height="2.5" fill="#e09030"/>
<rect x="621.3" y="246.1" width="2" height="2" fill="#ffd040"/>
<rect x="624.4" y="254.3" width="2.5" height="2.5" fill="#c05010"/>
<rect x="595.3" y="256.7" width="1" height="1" fill="#ffe080"/>
<rect x="617.3" y="256.0" width="2" height="2" fill="#e09030"/>
<rect x="626.0" y="255.8" width="1" height="1" fill="#ffe080"/>
<rect x="618.8" y="260.2" width="1" height="1" fill="#e09030"/>
<rect x="602.1" y="248.8" width="1" height="1" fill="#ffb020"/>
<rect x="609.9" y="243.8" width="2" height="2" fill="#c05010"/>
<rect x="623.0" y="266.2" width="2.5" height="2.5" fill="#e09030"/>
<rect x="629.7" y="250.6" width="1" height="1" fill="#c05010"/>
<rect x="629.7" y="247.5" width="1.5" height="1.5" fill="#ffe080"/>
<rect x="613.5" y="260.8" width="1" height="1" fill="#c05010"/>
<rect x="625.4" y="251.8" width="1.5" height="1.5" fill="#ffe080"/>
<rect x="608.4" y="246.4" width="1" height="1" fill="#ffd040"/>
<rect x="627.5" y="246.2" width="2" height="2" fill="#e09030"/>
<rect x="632.1" y="253.7" width="1.5" height="1.5" fill="#ffd040"/>
<rect x="624.3" y="267.5" width="1" height="1" fill="#c05010"/>
<rect x="634.9" y="256.0" width="1" height="1" fill="#ffb020"/>
<rect x="606.2" y="262.9" width="2.5" height="2.5" fill="#ffb020"/>
<rect x="630.3" y="252.1" width="2" height="2" fill="#ffe080"/>
<rect x="613.1" y="256.5" width="2.5" height="2.5" fill="#f08020"/>
<rect x="609.9" y="243.3" width="2.5" height="2.5" fill="#ffb020"/>
<rect x="642.8" y="253.6" width="2.5" height="2.5" fill="#ffe080"/>
<rect x="614.4" y="264.0" width="1.5" height="1.5" fill="#ffb020"/>
<rect x="624.1" y="268.0" width="2.5" height="2.5" fill="#e09030"/>
<rect x="634.8" y="254.9" width="2" height="2" fill="#ffb020"/>
<rect x="598.6" y="251.6" width="2" height="2" fill="#c05010"/>
<rect x="638.0" y="248.4" width="2" height="2" fill="#c05010"/>
<rect x="635.6" y="253.2" width="2" height="2" fill="#c05010"/>
<rect x="606.2" y="245.6" width="2.5" height="2.5" fill="#f08020"/>
<rect x="600.9" y="249.3" width="2" height="2" fill="#c05010"/>
<rect x="616.9" y="260.4" width="2.5" height="2.5" fill="#ffb020"/>
<rect x="616.2" y="242.2" width="1.5" height="1.5" fill="#c05010"/>
<rect x="632.4" y="257.0" width="1" height="1" fill="#e09030"/>
<rect x="627.7" y="254.6" width="1" height="1" fill="#ffe080"/>
<rect x="605.3" y="255.8" width="1" height="1" fill="#ffb020"/>
<rect x="638.3" y="248.1" width="1.5" height="1.5" fill="#ffb020"/>
<rect x="597.9" y="251.4" width="1" height="1" fill="#c05010"/>
<rect x="603.1" y="246.4" width="2" height="2" fill="#ffd040"/>
<rect x="604.6" y="266.4" width="1" height="1" fill="#ffd040"/>
<rect x="626.2" y="269.1" width="1" height="1" fill="#f08020"/>
<rect x="620.9" y="256.7" width="2" height="2" fill="#e09030"/>
<rect x="614.9" y="275.3" width="2.5" height="2.5" fill="#ffe080"/>
<rect x="604.3" y="255.7" width="2.5" height="2.5" fill="#c05010"/>
<rect x="619.4" y="255.6" width="2" height="2" fill="#ffd040"/>
<rect x="615.8" y="268.1" width="2" height="2" fill="#ffe080"/>
<rect x="628.8" y="270.4" width="2" height="2" fill="#f08020"/>
<rect x="606.2" y="248.3" width="2" height="2" fill="#e09030"/>
<rect x="629.5" y="235.4" width="1" height="1" fill="#802808"/>
<rect x="619.8" y="219.0" width="1" height="1" fill="#802808"/>
<rect x="624.4" y="207.1" width="1" height="1" fill="#802808"/>
<rect x="599.7" y="210.0" width="1" height="1" fill="#802808"/>
<rect x="625.1" y="222.3" width="1" height="1" fill="#802808"/>
<rect x="624.6" y="193.0" width="1" height="1" fill="#802808"/>
<rect x="600.6" y="195.1" width="1" height="1" fill="#802808"/>
<rect x="632.6" y="218.6" width="1" height="1" fill="#802808"/>
<rect x="602.3" y="213.0" width="1" height="1" fill="#802808"/>
<rect x="635.3" y="206.6" width="1" height="1" fill="#802808"/>
<rect x="624.3" y="199.3" width="1" height="1" fill="#802808"/>
<rect x="610.0" y="214.1" width="1" height="1" fill="#802808"/>
<rect x="617.0" y="228.9" width="1" height="1" fill="#802808"/>
<rect x="627.8" y="190.7" width="1" height="1" fill="#802808"/>
<rect x="608.9" y="234.7" width="1" height="1" fill="#802808"/>
<rect x="620.7" y="205.1" width="1" height="1" fill="#802808"/>
<rect x="602.8" y="217.1" width="1" height="1" fill="#802808"/>
<rect x="603.0" y="225.1" width="1" height="1" fill="#802808"/>
<rect x="616.9" y="232.1" width="1" height="1" fill="#802808"/>
<rect x="623.9" y="223.7" width="1" height="1" fill="#802808"/>
<rect x="632.8" y="209.1" width="1" height="1" fill="#802808"/>
<rect x="614.6" y="179.6" width="1" height="1" fill="#802808"/>
<rect x="595.7" y="190.9" width="1" height="1" fill="#802808"/>
<rect x="637.4" y="211.2" width="1" height="1" fill="#802808"/>
<rect x="620.1" y="231.2" width="1" height="1" fill="#802808"/>
</g>
<path d="M589.6 253.6 A42.8 42.8 0 0 1 645.4 253.6" fill="none" stroke="#d0bcae" stroke-width="0.9"/>
<path d="M561.7 221.1 A85.6 85.6 0 0 1 673.3 221.1" fill="none" stroke="#d0bcae" stroke-width="0.9"/>
<path d="M533.8 188.7 A128.4 128.4 0 0 1 701.2 188.7" fill="none" stroke="#d0bcae" stroke-width="0.9"/>
<path d="M505.9 156.2 A171.2 171.2 0 0 1 729.1 156.2" fill="none" stroke="#d0bcae" stroke-width="0.9"/>
<path d="M478.0 123.8 A214.0 214.0 0 0 1 757.0 123.8" fill="none" stroke="#d0bcae" stroke-width="0.9"/>
<path d="M478.0 123.8 L617.5 286.0 L757.0 123.8" fill="none" stroke="#d0bcae" stroke-width="0.9"/>
<line x1="617.5" y1="286.0" x2="617.5" y2="67" stroke="#e0c8b8" stroke-width="0.9" stroke-dasharray="1.6 1"/>
<g font-family="Liberation Sans" font-size="5.5" fill="#e8e8e8">
<text x="614.5" y="65">0°</text><text x="501" y="95">-30°</text><text x="725" y="95">30°</text>
<text x="758" y="130">39.5 m</text>
<text x="731" y="162">31.6 m</text>
<text x="703" y="195">23.7 m</text>
<text x="675" y="228">15.8 m</text>
<text x="646" y="261">7.9 m</text>
</g>
<g font-family="Liberation Sans" font-size="5.5" fill="#e0e0e0">
<text x="409" y="69">Ping number</text><text x="444" y="69">: 9624</text>
<text x="409" y="76">Act. ping rate</text><text x="444" y="76">: 20.7 p/s</text>
<text x="409" y="83">Range</text><text x="444" y="83">: 40.0 m</text>
<text x="409" y="90">Beams</text><text x="444" y="90">: 512</text>
</g>
<rect x="408" y="247" width="6" height="6" fill="#fff"/><rect x="408.5" y="257.5" width="5.5" height="6" fill="none" stroke="#777" stroke-width="0.8"/><rect x="408.5" y="268.5" width="5.5" height="6" fill="none" stroke="#777" stroke-width="0.8"/>
<g font-family="Liberation Sans" font-size="6" fill="#d0d0d0"><text x="418" y="253">Brightness: 3</text><text x="418" y="263.5">Contrast: -7</text><text x="418" y="274.5">Gamma: -4</text></g>
</svg>

<svg class="a" style="left:195px;top:297px" width="446" height="292" viewBox="195 297 446 292">
<defs><clipPath id="pfc"><path d="M411.0 436.0 L293.7 422.8 A118.0 118.0 0 0 1 408.1 318.0Z"/></clipPath></defs>
<rect x="195" y="297" width="446" height="292" fill="#a4c9ef"/>
<path d="M411.0 436.0 L293.7 422.8 A118.0 118.0 0 0 1 408.1 318.0Z" fill="#4a6a8c"/>
<g clip-path="url(#pfc)">
<line x1="402.1" y1="431.4" x2="306.3" y2="381.5" stroke="#7a98a8" stroke-width="4" opacity="0.35"/>
<line x1="402.1" y1="431.4" x2="306.3" y2="381.5" stroke="#c8d89a" stroke-width="2.2" stroke-dasharray="1.2 1.2" opacity="0.4"/>
<rect x="355.2" y="407.3" width="1" height="1" fill="#d0dca0" opacity="0.7"/>
<rect x="385.2" y="422.1" width="1" height="1" fill="#d0dca0" opacity="0.7"/>
<rect x="397.1" y="428.8" width="1" height="1" fill="#d0dca0" opacity="0.7"/>
<rect x="314.8" y="388.0" width="1" height="1" fill="#d0dca0" opacity="0.7"/>
<rect x="347.2" y="402.4" width="1" height="1" fill="#d0dca0" opacity="0.7"/>
<rect x="393.9" y="427.2" width="1" height="1" fill="#d0dca0" opacity="0.7"/>
<rect x="333.3" y="395.8" width="1" height="1" fill="#d0dca0" opacity="0.7"/>
<rect x="330.9" y="395.7" width="1" height="1" fill="#d0dca0" opacity="0.7"/>
<rect x="375.7" y="418.3" width="1" height="1" fill="#d0dca0" opacity="0.7"/>
<rect x="352.0" y="403.9" width="1" height="1" fill="#d0dca0" opacity="0.7"/>
<rect x="344.2" y="400.2" width="1" height="1" fill="#d0dca0" opacity="0.7"/>
<rect x="362.9" y="410.3" width="1" height="1" fill="#d0dca0" opacity="0.7"/>
<rect x="388.3" y="424.4" width="1" height="1" fill="#d0dca0" opacity="0.7"/>
<rect x="336.5" y="396.3" width="1" height="1" fill="#d0dca0" opacity="0.7"/>
<rect x="358.7" y="409.9" width="1" height="1" fill="#d0dca0" opacity="0.7"/>
<rect x="373.1" y="416.8" width="1" height="1" fill="#d0dca0" opacity="0.7"/>
<rect x="372.3" y="415.2" width="1" height="1" fill="#d0dca0" opacity="0.7"/>
<rect x="379.7" y="419.1" width="1" height="1" fill="#d0dca0" opacity="0.7"/>
<rect x="316.5" y="389.0" width="1" height="1" fill="#d0dca0" opacity="0.7"/>
<rect x="363.1" y="411.1" width="1" height="1" fill="#d0dca0" opacity="0.7"/>
<rect x="395.5" y="428.0" width="1" height="1" fill="#d0dca0" opacity="0.7"/>
<rect x="314.1" y="387.5" width="1" height="1" fill="#d0dca0" opacity="0.7"/>
<rect x="342.6" y="401.8" width="1" height="1" fill="#d0dca0" opacity="0.7"/>
<rect x="345.4" y="400.5" width="1" height="1" fill="#d0dca0" opacity="0.7"/>
<rect x="378.8" y="420.1" width="1" height="1" fill="#d0dca0" opacity="0.7"/>
<line x1="407.3" y1="426.7" x2="367.8" y2="326.2" stroke="#7a98a8" stroke-width="4" opacity="0.35"/>
<line x1="407.3" y1="426.7" x2="367.8" y2="326.2" stroke="#c8d89a" stroke-width="2.0" stroke-dasharray="1.2 1.2" opacity="0.4"/>
<rect x="402.4" y="414.0" width="1" height="1" fill="#d0dca0" opacity="0.7"/>
<rect x="404.6" y="420.5" width="1" height="1" fill="#d0dca0" opacity="0.7"/>
<rect x="387.8" y="374.0" width="1" height="1" fill="#d0dca0" opacity="0.7"/>
<rect x="389.4" y="381.9" width="1" height="1" fill="#d0dca0" opacity="0.7"/>
<rect x="380.1" y="361.3" width="1" height="1" fill="#d0dca0" opacity="0.7"/>
<rect x="382.7" y="366.9" width="1" height="1" fill="#d0dca0" opacity="0.7"/>
<rect x="383.9" y="363.2" width="1" height="1" fill="#d0dca0" opacity="0.7"/>
<rect x="403.5" y="416.8" width="1" height="1" fill="#d0dca0" opacity="0.7"/>
<rect x="381.6" y="364.4" width="1" height="1" fill="#d0dca0" opacity="0.7"/>
<rect x="396.2" y="396.0" width="1" height="1" fill="#d0dca0" opacity="0.7"/>
<rect x="366.1" y="327.1" width="1" height="1" fill="#d0dca0" opacity="0.7"/>
<rect x="380.4" y="353.8" width="1" height="1" fill="#d0dca0" opacity="0.7"/>
<rect x="396.7" y="399.3" width="1" height="1" fill="#d0dca0" opacity="0.7"/>
<rect x="403.8" y="418.0" width="1" height="1" fill="#d0dca0" opacity="0.7"/>
<rect x="380.4" y="357.3" width="1" height="1" fill="#d0dca0" opacity="0.7"/>
<rect x="374.7" y="348.4" width="1" height="1" fill="#d0dca0" opacity="0.7"/>
<rect x="393.1" y="388.5" width="1" height="1" fill="#d0dca0" opacity="0.7"/>
<rect x="383.3" y="366.1" width="1" height="1" fill="#d0dca0" opacity="0.7"/>
<rect x="391.4" y="383.1" width="1" height="1" fill="#d0dca0" opacity="0.7"/>
<rect x="382.4" y="367.6" width="1" height="1" fill="#d0dca0" opacity="0.7"/>
<rect x="374.7" y="345.7" width="1" height="1" fill="#d0dca0" opacity="0.7"/>
<rect x="388.5" y="380.8" width="1" height="1" fill="#d0dca0" opacity="0.7"/>
<rect x="388.3" y="379.7" width="1" height="1" fill="#d0dca0" opacity="0.7"/>
<rect x="402.3" y="413.5" width="1" height="1" fill="#d0dca0" opacity="0.7"/>
<rect x="401.9" y="412.1" width="1" height="1" fill="#d0dca0" opacity="0.7"/>
<line x1="411.0" y1="436.0" x2="331.3" y2="349.0" stroke="#9ab0c0" stroke-width="0.8" stroke-dasharray="2 2"/>
<rect x="409.5" y="431.8" width="1" height="1" fill="#d8e890"/>
<rect x="393.9" y="417.5" width="1" height="1" fill="#d8e890"/>
<rect x="390.0" y="425.4" width="1" height="1" fill="#d8e890"/>
<rect x="392.9" y="420.1" width="1" height="1" fill="#d8e890"/>
<rect x="410.0" y="422.6" width="1" height="1" fill="#d8e890"/>
<rect x="396.9" y="425.3" width="1" height="1" fill="#d8e890"/>
<rect x="390.2" y="420.5" width="1" height="1" fill="#d8e890"/>
<rect x="389.6" y="428.0" width="1" height="1" fill="#d8e890"/>
<rect x="388.2" y="424.1" width="1" height="1" fill="#d8e890"/>
<rect x="410.6" y="429.7" width="1" height="1" fill="#d8e890"/>
<rect x="409.8" y="424.4" width="1" height="1" fill="#d8e890"/>
<rect x="395.6" y="412.9" width="1" height="1" fill="#d8e890"/>
<rect x="408.0" y="435.4" width="1" height="1" fill="#d8e890"/>
<rect x="401.0" y="428.1" width="1" height="1" fill="#d8e890"/>
<rect x="409.4" y="414.2" width="1" height="1" fill="#d8e890"/>
<rect x="395.1" y="430.9" width="1" height="1" fill="#d8e890"/>
<rect x="391.0" y="429.6" width="1" height="1" fill="#d8e890"/>
<rect x="405.9" y="429.5" width="1" height="1" fill="#d8e890"/>
<rect x="388.1" y="431.2" width="1" height="1" fill="#d8e890"/>
<rect x="402.8" y="419.1" width="1" height="1" fill="#d8e890"/>
<rect x="391.7" y="421.0" width="1" height="1" fill="#d8e890"/>
<rect x="386.3" y="426.9" width="1" height="1" fill="#d8e890"/>
<rect x="402.8" y="413.8" width="1" height="1" fill="#d8e890"/>
<rect x="393.1" y="416.8" width="1" height="1" fill="#d8e890"/>
<rect x="402.3" y="434.4" width="1" height="1" fill="#d8e890"/>
<rect x="391.9" y="428.8" width="1" height="1" fill="#d8e890"/>
<rect x="389.4" y="430.9" width="1" height="1" fill="#d8e890"/>
<rect x="388.5" y="425.7" width="1" height="1" fill="#d8e890"/>
<rect x="408.0" y="434.9" width="1" height="1" fill="#d8e890"/>
<rect x="399.4" y="421.0" width="1" height="1" fill="#d8e890"/>
<rect x="394.7" y="429.9" width="1" height="1" fill="#d8e890"/>
<rect x="409.0" y="416.7" width="1" height="1" fill="#d8e890"/>
<rect x="408.8" y="415.6" width="1" height="1" fill="#d8e890"/>
<rect x="410.8" y="431.3" width="1" height="1" fill="#d8e890"/>
<rect x="394.4" y="415.4" width="1" height="1" fill="#d8e890"/>
<rect x="398.1" y="420.4" width="1" height="1" fill="#d8e890"/>
<rect x="384.9" y="430.5" width="1" height="1" fill="#d8e890"/>
<rect x="396.9" y="418.6" width="1" height="1" fill="#d8e890"/>
<rect x="404.8" y="422.0" width="1" height="1" fill="#d8e890"/>
<rect x="388.0" y="429.9" width="1" height="1" fill="#d8e890"/>
<rect x="394.1" y="419.8" width="1" height="1" fill="#d8e890"/>
<rect x="400.8" y="419.2" width="1" height="1" fill="#d8e890"/>
<rect x="407.4" y="430.7" width="1" height="1" fill="#d8e890"/>
<rect x="407.6" y="419.2" width="1" height="1" fill="#d8e890"/>
<rect x="407.3" y="423.1" width="1" height="1" fill="#d8e890"/>
<rect x="398.2" y="415.8" width="1" height="1" fill="#d8e890"/>
<rect x="385.1" y="431.7" width="1" height="1" fill="#d8e890"/>
<rect x="399.2" y="417.9" width="1" height="1" fill="#d8e890"/>
<rect x="393.3" y="421.2" width="1" height="1" fill="#d8e890"/>
<rect x="404.2" y="433.3" width="1" height="1" fill="#d8e890"/>
<rect x="390.7" y="428.1" width="1" height="1" fill="#d8e890"/>
<rect x="405.2" y="431.9" width="1" height="1" fill="#d8e890"/>
<rect x="398.8" y="421.2" width="1" height="1" fill="#d8e890"/>
<rect x="409.5" y="431.8" width="1" height="1" fill="#d8e890"/>
<rect x="405.7" y="420.7" width="1" height="1" fill="#d8e890"/>
<rect x="410.8" y="433.4" width="1" height="1" fill="#d8e890"/>
<rect x="409.7" y="414.5" width="1" height="1" fill="#d8e890"/>
<rect x="403.7" y="409.2" width="1" height="1" fill="#d8e890"/>
<rect x="403.5" y="430.8" width="1" height="1" fill="#d8e890"/>
<rect x="406.5" y="423.3" width="1" height="1" fill="#d8e890"/>
</g>
<path d="M387.5 433.4 A23.6 23.6 0 0 1 410.4 412.4" fill="none" stroke="#b8cce0" stroke-width="0.8"/>
<path d="M364.1 430.7 A47.2 47.2 0 0 1 409.8 388.8" fill="none" stroke="#b8cce0" stroke-width="0.8"/>
<path d="M340.6 428.1 A70.8 70.8 0 0 1 409.3 365.2" fill="none" stroke="#b8cce0" stroke-width="0.8"/>
<path d="M317.2 425.5 A94.4 94.4 0 0 1 408.7 341.6" fill="none" stroke="#b8cce0" stroke-width="0.8"/>
<path d="M256.1 339 H259.3 M257.7 337.4 V340.6" stroke="#1c2c4c" stroke-width="0.8"/>
<path d="M256.1 399 H259.3 M257.7 397.4 V400.6" stroke="#1c2c4c" stroke-width="0.8"/>
<path d="M256.1 459 H259.3 M257.7 457.4 V460.6" stroke="#1c2c4c" stroke-width="0.8"/>
<path d="M256.1 519 H259.3 M257.7 517.4 V520.6" stroke="#1c2c4c" stroke-width="0.8"/>
<path d="M316.1 339 H319.3 M317.7 337.4 V340.6" stroke="#1c2c4c" stroke-width="0.8"/>
<path d="M316.1 399 H319.3 M317.7 397.4 V400.6" stroke="#1c2c4c" stroke-width="0.8"/>
<path d="M316.1 459 H319.3 M317.7 457.4 V460.6" stroke="#1c2c4c" stroke-width="0.8"/>
<path d="M316.1 519 H319.3 M317.7 517.4 V520.6" stroke="#1c2c4c" stroke-width="0.8"/>
<path d="M376.1 339 H379.3 M377.7 337.4 V340.6" stroke="#1c2c4c" stroke-width="0.8"/>
<path d="M376.1 399 H379.3 M377.7 397.4 V400.6" stroke="#1c2c4c" stroke-width="0.8"/>
<path d="M376.1 459 H379.3 M377.7 457.4 V460.6" stroke="#1c2c4c" stroke-width="0.8"/>
<path d="M376.1 519 H379.3 M377.7 517.4 V520.6" stroke="#1c2c4c" stroke-width="0.8"/>
<path d="M436.1 339 H439.3 M437.7 337.4 V340.6" stroke="#1c2c4c" stroke-width="0.8"/>
<path d="M436.1 399 H439.3 M437.7 397.4 V400.6" stroke="#1c2c4c" stroke-width="0.8"/>
<path d="M436.1 459 H439.3 M437.7 457.4 V460.6" stroke="#1c2c4c" stroke-width="0.8"/>
<path d="M436.1 519 H439.3 M437.7 517.4 V520.6" stroke="#1c2c4c" stroke-width="0.8"/>
<path d="M496.1 339 H499.3 M497.7 337.4 V340.6" stroke="#1c2c4c" stroke-width="0.8"/>
<path d="M496.1 399 H499.3 M497.7 397.4 V400.6" stroke="#1c2c4c" stroke-width="0.8"/>
<path d="M496.1 459 H499.3 M497.7 457.4 V460.6" stroke="#1c2c4c" stroke-width="0.8"/>
<path d="M496.1 519 H499.3 M497.7 517.4 V520.6" stroke="#1c2c4c" stroke-width="0.8"/>
<path d="M556.1 339 H559.3 M557.7 337.4 V340.6" stroke="#1c2c4c" stroke-width="0.8"/>
<path d="M556.1 399 H559.3 M557.7 397.4 V400.6" stroke="#1c2c4c" stroke-width="0.8"/>
<path d="M556.1 459 H559.3 M557.7 457.4 V460.6" stroke="#1c2c4c" stroke-width="0.8"/>
<path d="M556.1 519 H559.3 M557.7 517.4 V520.6" stroke="#1c2c4c" stroke-width="0.8"/>
<path d="M616.1 339 H619.3 M617.7 337.4 V340.6" stroke="#1c2c4c" stroke-width="0.8"/>
<path d="M616.1 399 H619.3 M617.7 397.4 V400.6" stroke="#1c2c4c" stroke-width="0.8"/>
<path d="M616.1 459 H619.3 M617.7 457.4 V460.6" stroke="#1c2c4c" stroke-width="0.8"/>
<path d="M616.1 519 H619.3 M617.7 517.4 V520.6" stroke="#1c2c4c" stroke-width="0.8"/>
<g transform="translate(420 448) rotate(-35) scale(1.1)"><path d="M0 -14 Q5.5 -8 5.5 -3 L5.5 13 L-5.5 13 L-5.5 -3 Q-5.5 -8 0 -14Z" fill="#eef0f2" stroke="#111" stroke-width="1.1"/><path d="M0 -12 Q4 -7 4 -3 L4 4 L-4 4 L-4 -3 Q-4 -7 0 -12Z" fill="#1a1a1a"/><rect x="-2.8" y="-2" width="2" height="4.5" fill="#e8e8e8"/><rect x="0.8" y="-2" width="2" height="4.5" fill="#e8e8e8"/><path d="M-5.5 7 H5.5 M-5.5 10 H5.5 M-1.8 4 V13 M1.8 4 V13" stroke="#111" stroke-width="0.8"/></g>
<g font-family="Liberation Sans" font-size="6" fill="#1a2436">
<text x="197" y="343.5">2041680</text><path d="M196 338.5 v3" stroke="#333" stroke-width="0.6"/>
<text x="197" y="403.5">2041660</text><path d="M196 398.5 v3" stroke="#333" stroke-width="0.6"/>
<text x="197" y="463.5">2041640</text><path d="M196 458.5 v3" stroke="#333" stroke-width="0.6"/>
<text x="197" y="523.5">2041620</text><path d="M196 518.5 v3" stroke="#333" stroke-width="0.6"/>
<text x="197" y="583.5">2041600</text><path d="M196 578.5 v3" stroke="#333" stroke-width="0.6"/>
<text transform="translate(200.7 588) rotate(-90)" font-size="5.6">551700</text><path d="M194.7 571 h3" stroke="#333" stroke-width="0.6"/>
<text transform="translate(260.7 588) rotate(-90)" font-size="5.6">551720</text><path d="M254.7 571 h3" stroke="#333" stroke-width="0.6"/>
<text transform="translate(320.7 588) rotate(-90)" font-size="5.6">551740</text><path d="M314.7 571 h3" stroke="#333" stroke-width="0.6"/>
<text transform="translate(380.7 588) rotate(-90)" font-size="5.6">551760</text><path d="M374.7 571 h3" stroke="#333" stroke-width="0.6"/>
<text transform="translate(440.7 588) rotate(-90)" font-size="5.6">551780</text><path d="M434.7 571 h3" stroke="#333" stroke-width="0.6"/>
<text transform="translate(500.7 588) rotate(-90)" font-size="5.6">551800</text><path d="M494.7 571 h3" stroke="#333" stroke-width="0.6"/>
<text transform="translate(560.7 588) rotate(-90)" font-size="5.6">551820</text><path d="M554.7 571 h3" stroke="#333" stroke-width="0.6"/>
<text transform="translate(620.7 588) rotate(-90)" font-size="5.6">551840</text><path d="M614.7 571 h3" stroke="#333" stroke-width="0.6"/>
</g>
<rect x="195" y="297" width="1" height="292" fill="#8c96a2"/>
</svg>

<div class="a t" style="left:10px;top:302.7px;font-size:6px;color:#222;transform:scaleX(0.88);">Range</div>
<div class="a" style="left:95px;top:303.7px;width:22px;height:7px;background:#fff;border:1px solid #a4a8ac"></div>
<div class="a t" style="left:95px;top:303.2px;font-size:6px;color:#222;transform:scaleX(0.88);width:25.0px;text-align:center">40.0</div>
<div class="a t" style="left:133px;top:302.7px;font-size:6px;color:#222;transform:scaleX(0.88);">m</div>
<div class="a" style="left:10px;top:314.2px;width:128px;height:1px;background:#e2e2e2"></div>
<div class="a" style="left:13px;top:314.2px;width:0;height:0;border-top:1.5px solid transparent;border-bottom:1.5px solid transparent;border-right:2px solid #333"></div>
<div class="a" style="left:135px;top:314.2px;width:0;height:0;border-top:1.5px solid transparent;border-bottom:1.5px solid transparent;border-left:2px solid #333"></div>
<div class="a" style="left:123px;top:311.2px;width:8px;height:8px;background:linear-gradient(#f2f2f2,#d4d4d4);border:1px solid #b4b4b4;border-radius:1px"></div>
<div class="a t" style="left:12px;top:321.2px;font-size:6px;color:#222;transform:scaleX(0.88);">1.0</div>
<div class="a t" style="left:127px;top:321.2px;font-size:6px;color:#222;transform:scaleX(0.88);">40.0</div>
<div class="a t" style="left:10px;top:333.7px;font-size:6px;color:#222;transform:scaleX(0.88);">Sound speed</div>
<div class="a" style="left:95px;top:334.7px;width:22px;height:7px;background:#fff;border:1px solid #a4a8ac"></div>
<div class="a t" style="left:95px;top:334.2px;font-size:6px;color:#222;transform:scaleX(0.88);width:25.0px;text-align:center">1540</div>
<div class="a t" style="left:130px;top:333.7px;font-size:6px;color:#222;transform:scaleX(0.88);">m/s</div>
<div class="a" style="left:10px;top:345.2px;width:128px;height:1px;background:#e2e2e2"></div>
<div class="a" style="left:13px;top:345.2px;width:0;height:0;border-top:1.5px solid transparent;border-bottom:1.5px solid transparent;border-right:2px solid #333"></div>
<div class="a" style="left:135px;top:345.2px;width:0;height:0;border-top:1.5px solid transparent;border-bottom:1.5px solid transparent;border-left:2px solid #333"></div>
<div class="a" style="left:92px;top:342.2px;width:8px;height:8px;background:linear-gradient(#f2f2f2,#d4d4d4);border:1px solid #b4b4b4;border-radius:1px"></div>
<div class="a t" style="left:12px;top:352.2px;font-size:6px;color:#222;transform:scaleX(0.88);">1400</div>
<div class="a t" style="left:127px;top:352.2px;font-size:6px;color:#222;transform:scaleX(0.88);">1600</div>
<div class="a" style="left:20px;top:361px;width:6px;height:6px;border-radius:50%;background:radial-gradient(#2a3a6a 30%,#dde 45%,#aab 100%)"></div>
<div class="a t" style="left:27px;top:360px;font-size:6px;color:#222;transform:scaleX(0.88);">Manual from slider</div>
<div class="a" style="left:77px;top:361px;width:6px;height:6px;border-radius:50%;border:1px solid #ddd;background:#f6f6f6"></div>
<div class="a t" style="left:84px;top:360px;font-size:6px;color:#aaa;transform:scaleX(0.88);">Automatic from sensor</div>
<div class="a" style="left:10px;top:382px;width:6px;height:6px;border:1px solid #999;background:#fff"></div>
<div class="a" style="left:10.5px;top:380px;font-size:6px;color:#333;line-height:8px">✓</div>
<div class="a t" style="left:18px;top:381px;font-size:6px;color:#222;transform:scaleX(0.88);">Advanced settings</div>
<div class="a t" style="left:10px;top:394.5px;font-size:6px;color:#222;transform:scaleX(0.88);">Gain</div>
<div class="a" style="left:95px;top:395.5px;width:22px;height:7px;background:#fff;border:1px solid #a4a8ac"></div>
<div class="a t" style="left:95px;top:395.0px;font-size:6px;color:#222;transform:scaleX(0.88);width:25.0px;text-align:center">2.0</div>
<div class="a t" style="left:133px;top:394.5px;font-size:6px;color:#222;transform:scaleX(0.88);">dB</div>
<div class="a" style="left:10px;top:406.0px;width:128px;height:1px;background:#e2e2e2"></div>
<div class="a" style="left:13px;top:406.0px;width:0;height:0;border-top:1.5px solid transparent;border-bottom:1.5px solid transparent;border-right:2px solid #333"></div>
<div class="a" style="left:135px;top:406.0px;width:0;height:0;border-top:1.5px solid transparent;border-bottom:1.5px solid transparent;border-left:2px solid #333"></div>
<div class="a" style="left:20px;top:403.0px;width:8px;height:8px;background:linear-gradient(#f2f2f2,#d4d4d4);border:1px solid #b4b4b4;border-radius:1px"></div>
<div class="a t" style="left:11px;top:413.0px;font-size:6px;color:#222;transform:scaleX(0.88);">1.0</div>
<div class="a t" style="left:127px;top:413.0px;font-size:6px;color:#222;transform:scaleX(0.88);">50.0</div>
<div class="a t" style="left:10px;top:425.5px;font-size:6px;color:#222;transform:scaleX(0.88);">TVG</div>
<div class="a" style="left:95px;top:426.5px;width:22px;height:7px;background:#fff;border:1px solid #a4a8ac"></div>
<div class="a t" style="left:95px;top:426.0px;font-size:6px;color:#222;transform:scaleX(0.88);width:25.0px;text-align:center">0.0</div>
<div class="a t" style="left:128px;top:425.5px;font-size:6px;color:#222;transform:scaleX(0.88);">dB/m</div>
<div class="a" style="left:10px;top:437.0px;width:128px;height:1px;background:#e2e2e2"></div>
<div class="a" style="left:13px;top:437.0px;width:0;height:0;border-top:1.5px solid transparent;border-bottom:1.5px solid transparent;border-right:2px solid #333"></div>
<div class="a" style="left:135px;top:437.0px;width:0;height:0;border-top:1.5px solid transparent;border-bottom:1.5px solid transparent;border-left:2px solid #333"></div>
<div class="a" style="left:19px;top:434.0px;width:8px;height:8px;background:linear-gradient(#f2f2f2,#d4d4d4);border:1px solid #b4b4b4;border-radius:1px"></div>
<div class="a t" style="left:11px;top:444.0px;font-size:6px;color:#222;transform:scaleX(0.88);">0.0</div>
<div class="a t" style="left:127px;top:444.0px;font-size:6px;color:#222;transform:scaleX(0.88);">10.0</div>
<div class="a t" style="left:10px;top:456.5px;font-size:6px;color:#222;transform:scaleX(0.88);">Ping delay</div>
<div class="a" style="left:95px;top:457.5px;width:22px;height:7px;background:#fff;border:1px solid #a4a8ac"></div>
<div class="a t" style="left:95px;top:457.0px;font-size:6px;color:#222;transform:scaleX(0.88);width:25.0px;text-align:center">0</div>
<div class="a t" style="left:132px;top:456.5px;font-size:6px;color:#222;transform:scaleX(0.88);">ms</div>
<div class="a" style="left:10px;top:468.0px;width:128px;height:1px;background:#e2e2e2"></div>
<div class="a" style="left:13px;top:468.0px;width:0;height:0;border-top:1.5px solid transparent;border-bottom:1.5px solid transparent;border-right:2px solid #333"></div>
<div class="a" style="left:135px;top:468.0px;width:0;height:0;border-top:1.5px solid transparent;border-bottom:1.5px solid transparent;border-left:2px solid #333"></div>
<div class="a" style="left:19px;top:465.0px;width:8px;height:8px;background:linear-gradient(#f2f2f2,#d4d4d4);border:1px solid #b4b4b4;border-radius:1px"></div>
<div class="a t" style="left:11px;top:475.0px;font-size:6px;color:#222;transform:scaleX(0.88);">0</div>
<div class="a t" style="left:129px;top:475.0px;font-size:6px;color:#222;transform:scaleX(0.88);">999</div>

<div class="a" style="left:653px;top:314.5px;width:138px;height:1px;background:#d8d8d8"></div>
<div class="a" style="left:653px;top:331.5px;width:138px;height:1px;background:#d8d8d8"></div>
<div class="a" style="left:692px;top:297px;width:1px;height:51px;background:#d4d4d4"></div>
<div class="a" style="left:784px;top:297px;width:1px;height:51px;background:#d4d4d4"></div>
<div class="a t" style="left:600px;top:301.5px;width:91.5px;text-align:right;font-size:7.6px;color:#2a2a2a"><span style="display:inline-block;transform:scaleX(0.86);transform-origin:100% 50%">Antenna X</span></div>
<div class="a t" style="left:600px;top:319px;width:91.5px;text-align:right;font-size:7.6px;color:#2a2a2a"><span style="display:inline-block;transform:scaleX(0.86);transform-origin:100% 50%">Antenna Y</span></div>
<div class="a t" style="left:600px;top:336px;width:91.5px;text-align:right;font-size:7.6px;color:#2a2a2a"><span style="display:inline-block;transform:scaleX(0.86);transform-origin:100% 50%">True Heading</span></div>
<div class="a" style="left:650px;top:297.2px;width:132.5px;text-align:right;font-size:13.4px;line-height:16px;color:#111;white-space:nowrap">551773.58</div>
<div class="a" style="left:650px;top:314.3px;width:132.5px;text-align:right;font-size:13.4px;line-height:16px;color:#111;white-space:nowrap">2041645.18</div>
<div class="a" style="left:650px;top:331.8px;width:132.5px;text-align:right;font-size:13.4px;line-height:16px;color:#111;white-space:nowrap">325.44</div>
<div class="a t" style="left:786px;top:302px;font-size:6.5px;color:#444;transform:scaleX(1);">m</div>
<div class="a t" style="left:786px;top:319.5px;font-size:6.5px;color:#444;transform:scaleX(1);">m</div>
<div class="a t" style="left:788px;top:335px;font-size:6px;color:#555;transform:scaleX(1);">°</div>
<div class="a" style="left:646px;top:449px;width:57px;height:139px;background:#fff;border-right:1px solid #c8c8c8"></div>
<div class="a" style="left:646px;top:449px;width:49px;height:129px;overflow:hidden">
<div class="a t" style="left:0px;top:0.5px;font-size:6.8px;color:#222;transform:scaleX(0.86)">oment</div>
<div class="a t" style="left:0px;top:9.6px;font-size:6.8px;color:#222;transform:scaleX(0.86)">ositioning system</div>
<svg class="a" style="left:0px;top:19.1px" width="6" height="7" viewBox="0 0 6 7"><rect x="0.5" y="0.5" width="4" height="5" fill="#fff" stroke="#444" stroke-width="0.8"/><rect x="1" y="3.5" width="5" height="3.5" fill="#333"/><rect x="2" y="4.5" width="2" height="1" fill="#ddd"/></svg>
<div class="a t" style="left:7px;top:18.6px;font-size:6.8px;color:#222;transform:scaleX(0.86)">Device Data</div>
<div class="a t" style="left:3px;top:27.6px;font-size:6.8px;color:#222;transform:scaleX(0.86)">- Antenna Positio</div>
<div class="a t" style="left:3px;top:36.7px;font-size:6.8px;color:#222;transform:scaleX(0.86)">- Reference Point</div>
<div class="a t" style="left:0px;top:45.8px;font-size:6.8px;color:#222;transform:scaleX(0.86)">ompass(1) - NMEA</div>
<svg class="a" style="left:0px;top:55.3px" width="6" height="7" viewBox="0 0 6 7"><rect x="0.5" y="0.5" width="4" height="5" fill="#fff" stroke="#444" stroke-width="0.8"/><rect x="1" y="3.5" width="5" height="3.5" fill="#333"/><rect x="2" y="4.5" width="2" height="1" fill="#ddd"/></svg>
<div class="a t" style="left:7px;top:54.8px;font-size:6.8px;color:#222;transform:scaleX(0.86)">Device Data</div>
<div class="a t" style="left:3px;top:63.9px;font-size:6.8px;color:#222;transform:scaleX(0.86)">- Heading compu</div>
<div class="a t" style="left:0px;top:72.9px;font-size:6.8px;color:#222;transform:scaleX(0.86)">RU(1) - Octans(vn</div>
<svg class="a" style="left:0px;top:82.5px" width="6" height="7" viewBox="0 0 6 7"><rect x="0.5" y="0.5" width="4" height="5" fill="#fff" stroke="#444" stroke-width="0.8"/><rect x="1" y="3.5" width="5" height="3.5" fill="#333"/><rect x="2" y="4.5" width="2" height="1" fill="#ddd"/></svg>
<div class="a t" style="left:7px;top:82.0px;font-size:6.8px;color:#222;transform:scaleX(0.86)">Device Data</div>
<div class="a t" style="left:3px;top:91.0px;font-size:6.8px;color:#222;transform:scaleX(0.86)">- Attitude compu</div>
<div class="a t" style="left:0px;top:100.0px;font-size:6.8px;color:#222;transform:scaleX(0.86)">ound Velocity(1) -</div>
<svg class="a" style="left:0px;top:109.6px" width="6" height="7" viewBox="0 0 6 7"><rect x="0.5" y="0.5" width="4" height="5" fill="#fff" stroke="#444" stroke-width="0.8"/><rect x="1" y="3.5" width="5" height="3.5" fill="#333"/><rect x="2" y="4.5" width="2" height="1" fill="#ddd"/></svg>
<div class="a t" style="left:7px;top:109.1px;font-size:6.8px;color:#222;transform:scaleX(0.86)">Device Data</div>
<div class="a t" style="left:3px;top:118.1px;font-size:6.8px;color:#222;transform:scaleX(0.86)">- Speed Of Sounc</div>
<div class="a t" style="left:3px;top:127.2px;font-size:6.8px;color:#222;transform:scaleX(0.86)">- -  ... (1) - Pl</div>
</div>
<div class="a" style="left:695px;top:449px;width:7px;height:129px;background:#eaeaea"></div>
<div class="a" style="left:696px;top:460px;width:6px;height:30px;background:linear-gradient(90deg,#dcdcdc,#c8c8c8);border:1px solid #bcbcbc;border-radius:1px"></div>
<div class="a" style="left:697px;top:452px;width:0;height:0;border-left:2px solid transparent;border-right:2px solid transparent;border-bottom:2px solid #333"></div>
<div class="a" style="left:697px;top:574px;width:0;height:0;border-left:2px solid transparent;border-right:2px solid transparent;border-top:2px solid #333"></div>
<div class="a" style="left:646px;top:579px;width:56px;height:8px;background:#eaeaea"></div>
<div class="a" style="left:663px;top:580px;width:9px;height:6px;background:linear-gradient(#e4e4e4,#cfcfcf);border:1px solid #b8b8b8"></div>
<div class="a" style="left:650px;top:582px;width:0;height:0;border-top:1.5px solid transparent;border-bottom:1.5px solid transparent;border-right:2px solid #333"></div>
<div class="a" style="left:690px;top:582px;width:0;height:0;border-top:1.5px solid transparent;border-bottom:1.5px solid transparent;border-left:2px solid #333"></div>
<div class="a" style="left:706px;top:449px;width:93px;height:139px;background:#f2f2f2;border-left:1px solid #6a6e74;border-top:1px solid #8a8e94"></div>
<div class="a" style="left:710px;top:452px;width:84px;height:40px;border:1px solid #e0e0e0"></div>
<div class="a" style="left:710px;top:495px;width:84px;height:55px;border:1px solid #e0e0e0"></div>
<div class="a" style="left:711px;top:453px;width:9px;height:9px;background:#fff;border:1px solid #d0d4d8"></div>
<svg class="a" style="left:713px;top:455px" width="7" height="6" viewBox="0 0 7 6"><path d="M0.6 3 L2.6 5.2 L6.5 0.6" stroke="#2a8a2a" stroke-width="1.4" fill="none"/></svg>
<div class="a t" style="left:723px;top:454px;font-size:6.8px;font-weight:bold;color:#222;transform:scaleX(0.92)">Data Buffer</div>
<div class="a t" style="left:711px;top:464px;font-size:6.4px;color:#333;transform:scaleX(0.88);">Vessel:</div>
<div class="a t" style="left:737px;top:464px;font-size:6.4px;color:#333;transform:scaleX(0.88);">BlueView</div>
<div class="a t" style="left:711px;top:473px;font-size:6.4px;color:#333;transform:scaleX(0.88);">Group:</div>
<div class="a t" style="left:737px;top:473px;font-size:6.4px;color:#333;transform:scaleX(0.88);">Heading computation</div>
<div class="a t" style="left:711px;top:482px;font-size:6.4px;color:#333;transform:scaleX(0.88);">Name:</div>
<div class="a t" style="left:737px;top:482px;font-size:6.4px;color:#333;transform:scaleX(0.88);">Heading computation</div>
<div class="a" style="left:711px;top:496px;width:9px;height:9px;background:#fff;border:1px solid #d0d4d8"></div>
<svg class="a" style="left:713px;top:498px" width="7" height="6" viewBox="0 0 7 6"><path d="M0.6 3 L2.6 5.2 L6.5 0.6" stroke="#2a8a2a" stroke-width="1.4" fill="none"/></svg>
<div class="a t" style="left:723px;top:497px;font-size:6.8px;font-weight:bold;color:#222;transform:scaleX(0.92)">Data Block</div>
<div class="a t" style="left:769px;top:497px;font-size:6.4px;color:#222;transform:scaleX(0.9);">7/23/2014</div>
<svg class="a" style="left:713px;top:507.5px" width="7" height="6" viewBox="0 0 7 6"><path d="M0.6 3 L2.6 5.2 L6.5 0.6" stroke="#2a8a2a" stroke-width="1.4" fill="none"/></svg>
<div class="a" style="left:721px;top:505.5px;width:47px;height:10px;border:1px solid #d8d8d8;background:#f4f4f4"></div>
<div class="a" style="left:767px;top:505.5px;width:31px;height:10px;border:1px solid #d8d8d8;background:#f4f4f4"></div>
<div class="a t" style="left:722px;top:506.5px;font-size:6.4px;color:#333;transform:scaleX(0.88);">Grid Heading</div>
<div class="a t" style="left:768px;top:506.5px;font-size:6.4px;color:#333;transform:scaleX(0.88);">317.55</div>
<svg class="a" style="left:713px;top:517.7px" width="7" height="6" viewBox="0 0 7 6"><path d="M0.6 3 L2.6 5.2 L6.5 0.6" stroke="#2a8a2a" stroke-width="1.4" fill="none"/></svg>
<div class="a" style="left:721px;top:515.7px;width:47px;height:10px;border:1px solid #d8d8d8;background:#f4f4f4"></div>
<div class="a" style="left:767px;top:515.7px;width:31px;height:10px;border:1px solid #d8d8d8;background:#f4f4f4"></div>
<div class="a t" style="left:722px;top:516.7px;font-size:6.4px;color:#333;transform:scaleX(0.88);">True Heading</div>
<div class="a t" style="left:768px;top:516.7px;font-size:6.4px;color:#333;transform:scaleX(0.88);">325.44</div>
<svg class="a" style="left:713px;top:527.9px" width="7" height="6" viewBox="0 0 7 6"><path d="M0.6 3 L2.6 5.2 L6.5 0.6" stroke="#2a8a2a" stroke-width="1.4" fill="none"/></svg>
<div class="a" style="left:721px;top:525.9px;width:47px;height:10px;border:1px solid #d8d8d8;background:#f4f4f4"></div>
<div class="a" style="left:767px;top:525.9px;width:31px;height:10px;border:1px solid #d8d8d8;background:#f4f4f4"></div>
<div class="a t" style="left:722px;top:526.9px;font-size:6.4px;color:#333;transform:scaleX(0.88);">Grid Convergence</div>
<div class="a t" style="left:768px;top:526.9px;font-size:6.4px;color:#333;transform:scaleX(0.88);">-7.89</div>
<svg class="a" style="left:713px;top:538.1px" width="7" height="6" viewBox="0 0 7 6"><path d="M0.6 3 L2.6 5.2 L6.5 0.6" stroke="#2a8a2a" stroke-width="1.4" fill="none"/></svg>
<div class="a" style="left:721px;top:536.1px;width:47px;height:10px;border:1px solid #d8d8d8;background:#f4f4f4"></div>
<div class="a" style="left:767px;top:536.1px;width:31px;height:10px;border:1px solid #d8d8d8;background:#f4f4f4"></div>
<div class="a t" style="left:722px;top:537.1px;font-size:6.4px;color:#333;transform:scaleX(0.88);">Rate of Turn</div>
<div class="a t" style="left:768px;top:537.1px;font-size:6.4px;color:#333;transform:scaleX(0.88);">0.00</div>
<div class="a" style="left:707px;top:579px;width:91px;height:8px;background:#eaeaea"></div>
<div class="a" style="left:717px;top:580px;width:56px;height:6px;background:linear-gradient(#e8e8e8,#cfcfcf);border:1px solid #b8b8b8;border-radius:1px"></div>
<div class="a" style="left:743px;top:582px;width:4px;height:2px;border-left:1px solid #888;border-right:1px solid #888"></div>
<div class="a" style="left:710px;top:582px;width:0;height:0;border-top:1.5px solid transparent;border-bottom:1.5px solid transparent;border-right:2px solid #333"></div>
<div class="a" style="left:792px;top:582px;width:0;height:0;border-top:1.5px solid transparent;border-bottom:1.5px solid transparent;border-left:2px solid #333"></div>
<div class="a t" style="left:2px;top:591px;font-size:7px;color:#222;transform:scaleX(0.779);">X: 551846&nbsp; Y: 2041682 Sat.Lat: 066.0282°N Sat.Lon: 014.0194°E</div>
<div class="a t" style="left:681px;top:591px;font-size:7px;color:#222;transform:scaleX(0.86);">BlueView</div>
<div class="a t" style="left:709px;top:591px;font-size:7px;color:#222;transform:scaleX(0.86);">Zero Offset</div>
<svg class="a" style="left:748px;top:591px" width="6" height="7" viewBox="0 0 6 7"><path d="M3 0.5 L5.7 6.5 H0.3Z" fill="#f0d040" stroke="#a08020" stroke-width="0.6"/></svg>
<div class="a" style="left:756px;top:591px;width:13px;height:8px;background:#f0a8a8"></div>
<div class="a t" style="left:757px;top:591px;font-size:7px;color:#c82828;transform:scaleX(0.78);">LOG</div>
<div class="a" style="left:771px;top:591px;width:13px;height:8px;background:#f0a8a8"></div>
<div class="a t" style="left:772px;top:591px;font-size:7px;color:#c82828;transform:scaleX(0.78);">EVT</div>
<div class="a" style="left:785px;top:591px;width:15px;height:8px;background:#a4e4a4"></div>
<div class="a t" style="left:786px;top:591px;font-size:7px;color:#208a20;transform:scaleX(0.78);">MSG</div>

<svg class="a" style="left:8px;top:50px" width="8" height="8" viewBox="0 0 8 8"><circle cx="3.5" cy="3.5" r="2.8" fill="#fff" stroke="#222" stroke-width="1.1"/><path d="M5.6 5.6 L8 8" stroke="#222" stroke-width="1.6"/><path d="M2 3.5 H5 M3.5 2 V5" stroke="#a01830" stroke-width="0.9"/></svg>
<svg class="a" style="left:20px;top:50px" width="8" height="8" viewBox="0 0 8 8"><circle cx="3.5" cy="3.5" r="2.8" fill="#fff" stroke="#222" stroke-width="1.1"/><path d="M5.6 5.6 L8 8" stroke="#222" stroke-width="1.6"/><path d="M2 3.5 H5" stroke="#222" stroke-width="0.9"/></svg>
<svg class="a" style="left:31px;top:50px" width="8" height="8" viewBox="0 0 8 8"><circle cx="3.5" cy="3.5" r="2.8" fill="#fff" stroke="#222" stroke-width="1.1"/><path d="M5.6 5.6 L8 8" stroke="#222" stroke-width="1.6"/></svg>
<div class="a" style="left:42px;top:49px;width:1px;height:9px;background:#cfd2d6;box-shadow:1px 0 0 #fff"></div>
<div class="a" style="left:45px;top:48px;width:12px;height:11px;background:#e4e8ec;border:1px solid #8a949e;border-radius:2px"></div>
<svg class="a" style="left:47px;top:50px" width="8" height="8" viewBox="0 0 8 8"><path d="M1 7 L6.5 1.5" stroke="#444" stroke-width="1.6"/><circle cx="1.8" cy="6.2" r="1.2" fill="none" stroke="#444" stroke-width="0.7"/><rect x="6" y="0" width="2" height="2" fill="#2a3a8a"/></svg>
<svg class="a" style="left:58px;top:50px" width="8" height="8" viewBox="0 0 8 8"><circle cx="3" cy="5" r="2.5" fill="#f0f020"/><path d="M3 5 L7.5 0.5" stroke="#555" stroke-width="1.1"/></svg>
<svg class="a" style="left:70px;top:50px" width="8" height="7" viewBox="0 0 8 7"><rect x="0.5" y="1.5" width="7" height="5" fill="#fff" stroke="#333" stroke-width="0.9"/><rect x="0.5" y="1.5" width="7" height="1.5" fill="#333"/></svg>
<div class="a" style="left:80px;top:48px;width:11px;height:11px;background:#e4e8ec;border:1px solid #8a949e;border-radius:2px"></div>
<svg class="a" style="left:82px;top:50px" width="8" height="8" viewBox="0 0 8 8"><path d="M4 0.5 V7.5 M0.5 4 H7.5" stroke="#111" stroke-width="1.3"/></svg>
<svg class="a" style="left:92px;top:51px" width="8" height="6" viewBox="0 0 8 6"><rect x="0" y="1" width="8" height="5" fill="#1a1a1a"/><rect x="4" y="2.5" width="3" height="2" fill="#fff"/></svg>
<div class="a" style="left:104px;top:49px;width:1px;height:9px;background:#cfd2d6;box-shadow:1px 0 0 #fff"></div>
<svg class="a" style="left:108px;top:50px" width="8" height="8" viewBox="0 0 8 8"><rect x="0.5" y="0.5" width="7" height="7" fill="#fff" stroke="#333" stroke-width="1"/></svg>
<div class="a" style="left:120px;top:49px;width:1px;height:9px;background:#cfd2d6;box-shadow:1px 0 0 #fff"></div>
<div class="a" style="left:122px;top:48px;width:10px;height:11px;background:#e4e8ec;border:1px solid #8a949e;border-radius:2px"></div>
<svg class="a" style="left:124px;top:49px" width="8" height="9" viewBox="0 0 8 9"><rect x="0" y="0" width="2" height="9" fill="#c0c4c8"/><rect x="3" y="0" width="2" height="9" fill="#e03030"/><rect x="3" y="3" width="2" height="3" fill="#30b040"/><rect x="3" y="6" width="2" height="3" fill="#3050c0"/></svg>
<svg class="a" style="left:136px;top:50px" width="11" height="8" viewBox="0 0 11 8"><path d="M4 0.5 A3.5 3.5 0 0 0 0.5 4 A3.5 3.5 0 0 0 4 7.5 L7.5 4Z" fill="#e03030"/><path d="M0.5 4 A3.5 3.5 0 0 0 4 7.5 L4.5 4Z" fill="#30a040"/><path d="M2 6.5 A3.5 3.5 0 0 0 4 7.5 L4.5 4Z" fill="#3050c0"/><path d="M4 1 L7.5 3.5 L4 4Z" fill="#f0c020"/><path d="M9 4 L11 4 L10 5.5Z" fill="#222"/></svg>
<svg class="a" style="left:152px;top:50px" width="8" height="8" viewBox="0 0 8 8"><path d="M1 7 L7 1" stroke="#2a9a3a" stroke-width="3"/><path d="M4 4 L7 1" stroke="#2a4aa0" stroke-width="3"/><circle cx="2" cy="6" r="1.5" fill="#30b030"/></svg>
<div class="a" style="left:163px;top:49px;width:1px;height:9px;background:#cfd2d6;box-shadow:1px 0 0 #fff"></div>
<svg class="a" style="left:166px;top:50px" width="9" height="8" viewBox="0 0 9 8"><path d="M3 0.5 H8.5 V5 H6 V7.5 H0.5 V3 H3Z" fill="#fff" stroke="#333" stroke-width="0.9"/><path d="M3 3 H6 V5" fill="none" stroke="#333" stroke-width="0.7"/></svg>
<svg class="a" style="left:177px;top:50px" width="9" height="8" viewBox="0 0 9 8"><rect x="3.5" y="0.5" width="5" height="4" fill="#fff" stroke="#333" stroke-width="0.9"/><rect x="0.5" y="3.5" width="5" height="4" fill="#fff" stroke="#333" stroke-width="0.9"/><rect x="5" y="1" width="3" height="1.5" fill="#333"/></svg>
<svg class="a" style="left:380px;top:38px" width="8" height="8" viewBox="0 0 8 8"><rect x="0" y="0" width="8" height="8" fill="#f4f6f8"/><path d="M7.5 0.5 V7.5 H1" stroke="#555" stroke-width="0.6" fill="none"/><circle cx="3.8" cy="3.8" r="1.9" fill="#fff" stroke="#111" stroke-width="1.3"/></svg>
<svg class="a" style="left:390px;top:39px" width="8" height="8" viewBox="0 0 8 8"><rect x="0.5" y="0.5" width="7" height="7" fill="#e4e8ee" stroke="#b4bac2"/><path d="M2 2.5 H6 M2 4 H6 M2 5.5 H6" stroke="#9aa2ac" stroke-width="0.6"/></svg>
<svg class="a" style="left:408px;top:50px" width="8" height="8" viewBox="0 0 8 8"><circle cx="3.5" cy="3.5" r="2.8" fill="#fff" stroke="#222" stroke-width="1.1"/><path d="M5.6 5.6 L8 8" stroke="#222" stroke-width="1.6"/><path d="M2 3.5 H5 M3.5 2 V5" stroke="#a01830" stroke-width="0.9"/></svg>
<svg class="a" style="left:419px;top:50px" width="8" height="8" viewBox="0 0 8 8"><circle cx="3.5" cy="3.5" r="2.8" fill="#fff" stroke="#222" stroke-width="1.1"/><path d="M5.6 5.6 L8 8" stroke="#222" stroke-width="1.6"/><path d="M2 3.5 H5" stroke="#222" stroke-width="0.9"/></svg>
<svg class="a" style="left:431px;top:50px" width="8" height="8" viewBox="0 0 8 8"><circle cx="3.5" cy="3.5" r="2.8" fill="#fff" stroke="#222" stroke-width="1.1"/><path d="M5.6 5.6 L8 8" stroke="#222" stroke-width="1.6"/></svg>
<div class="a" style="left:443px;top:49px;width:1px;height:9px;background:#cfd2d6;box-shadow:1px 0 0 #fff"></div>
<svg class="a" style="left:448px;top:50px" width="8" height="8" viewBox="0 0 8 8"><circle cx="3.5" cy="3.5" r="1.7" fill="#fff" stroke="#444" stroke-width="0.8"/><g fill="#777"><circle cx="3.5" cy="0.6" r="0.5"/><circle cx="3.5" cy="6.4" r="0.5"/><circle cx="0.6" cy="3.5" r="0.5"/><circle cx="6.4" cy="3.5" r="0.5"/><circle cx="1.5" cy="1.5" r="0.45"/><circle cx="5.5" cy="1.5" r="0.45"/><circle cx="1.5" cy="5.5" r="0.45"/></g><path d="M5 7 H8 M6.5 5.5 V8" stroke="#222" stroke-width="0.7"/></svg>
<svg class="a" style="left:460px;top:50px" width="8" height="8" viewBox="0 0 8 8"><circle cx="3.5" cy="3.5" r="1.7" fill="#fff" stroke="#444" stroke-width="0.8"/><g fill="#777"><circle cx="3.5" cy="0.6" r="0.5"/><circle cx="3.5" cy="6.4" r="0.5"/><circle cx="0.6" cy="3.5" r="0.5"/><circle cx="6.4" cy="3.5" r="0.5"/><circle cx="1.5" cy="1.5" r="0.45"/><circle cx="5.5" cy="1.5" r="0.45"/><circle cx="1.5" cy="5.5" r="0.45"/></g><path d="M5 7 H8" stroke="#222" stroke-width="0.7"/></svg>
<svg class="a" style="left:471px;top:50px" width="8" height="8" viewBox="0 0 8 8"><circle cx="3.5" cy="3.5" r="3" fill="#fff" stroke="#222" stroke-width="0.8"/><path d="M3.5 0.5 A3 3 0 0 0 3.5 6.5Z" fill="#222"/><path d="M5.5 7 H8" stroke="#222" stroke-width="0.7"/></svg>
<svg class="a" style="left:484px;top:50px" width="8" height="8" viewBox="0 0 8 8"><circle cx="3.5" cy="3.5" r="3" fill="#fff" stroke="#222" stroke-width="0.8"/><path d="M3.5 0.5 A3 3 0 0 0 3.5 6.5Z" fill="#222"/><path d="M5.5 7 H8" stroke="#222" stroke-width="0.7"/></svg>
<svg class="a" style="left:494px;top:50px" width="9" height="8" viewBox="0 0 9 8"><path d="M0.5 6.5 H8.5" stroke="#222" stroke-width="1"/><path d="M4.5 0.5 V4.5 M3 3 L4.5 4.5 L6 3" stroke="#222" stroke-width="0.9" fill="none"/><path d="M1.5 5 L4.5 3.5 L7.5 5" stroke="#222" stroke-width="0.6" fill="none"/></svg>
<svg class="a" style="left:506px;top:50px" width="9" height="8" viewBox="0 0 9 8"><path d="M0.5 6.5 H8.5" stroke="#222" stroke-width="1"/><path d="M4.5 0.5 V4.5 M3 3 L4.5 4.5 L6 3" stroke="#222" stroke-width="0.9" fill="none"/><path d="M1.5 5 L4.5 3.5 L7.5 5" stroke="#222" stroke-width="0.6" fill="none"/></svg>
<div class="a" style="left:516px;top:49px;width:1px;height:9px;background:#cfd2d6;box-shadow:1px 0 0 #fff"></div>
<svg class="a" style="left:521px;top:50px" width="8" height="8" viewBox="0 0 8 8"><path d="M1 7.5 C0.5 4 3 1 7.5 0.5 C7 4 4.5 7 1 7.5Z" fill="#fff" stroke="#333" stroke-width="0.9"/></svg>
<svg class="a" style="left:533px;top:50px" width="8" height="7" viewBox="0 0 8 7"><rect x="0.5" y="1.5" width="7" height="5" fill="#fff" stroke="#333" stroke-width="0.9"/><rect x="0.5" y="1.5" width="7" height="1.5" fill="#333"/></svg>
<svg class="a" style="left:544px;top:51px" width="8" height="6" viewBox="0 0 8 6"><rect x="0" y="1" width="8" height="5" fill="#1a1a1a"/><rect x="4" y="2.5" width="3" height="2" fill="#fff"/></svg>
<svg class="a" style="left:556px;top:51px" width="6" height="6" viewBox="0 0 6 6"><rect x="0.5" y="0" width="2" height="6" fill="#111"/><rect x="3.5" y="0" width="2" height="6" fill="#111"/></svg>
<div class="a" style="left:565px;top:49px;width:1px;height:9px;background:#cfd2d6;box-shadow:1px 0 0 #fff"></div>
<svg class="a" style="left:569px;top:50px" width="9" height="8" viewBox="0 0 9 8"><path d="M3 0.5 H8.5 V5 H6 V7.5 H0.5 V3 H3Z" fill="#fff" stroke="#333" stroke-width="0.9"/><path d="M3 3 H6 V5" fill="none" stroke="#333" stroke-width="0.7"/></svg>
<svg class="a" style="left:581px;top:50px" width="9" height="8" viewBox="0 0 9 8"><rect x="3.5" y="0.5" width="5" height="4" fill="#fff" stroke="#333" stroke-width="0.9"/><rect x="0.5" y="3.5" width="5" height="4" fill="#fff" stroke="#333" stroke-width="0.9"/><rect x="5" y="1" width="3" height="1.5" fill="#333"/></svg>
<svg class="a" style="left:781px;top:38px" width="8" height="8" viewBox="0 0 8 8"><rect x="0" y="0" width="8" height="8" fill="#f4f6f8"/><path d="M7.5 0.5 V7.5 H1" stroke="#555" stroke-width="0.6" fill="none"/><circle cx="3.8" cy="3.8" r="1.9" fill="#fff" stroke="#111" stroke-width="1.3"/></svg>
<svg class="a" style="left:790px;top:39px" width="8" height="8" viewBox="0 0 8 8"><rect x="0.5" y="0.5" width="7" height="7" fill="#e4e8ee" stroke="#b4bac2"/><path d="M2 2.5 H6 M2 4 H6 M2 5.5 H6" stroke="#9aa2ac" stroke-width="0.6"/></svg>
<svg class="a" style="left:173px;top:286px" width="8" height="8" viewBox="0 0 8 8"><rect x="0" y="0" width="8" height="8" fill="#f4f6f8"/><path d="M7.5 0.5 V7.5 H1" stroke="#555" stroke-width="0.6" fill="none"/><circle cx="3.8" cy="3.8" r="1.9" fill="#fff" stroke="#111" stroke-width="1.3"/></svg>
<svg class="a" style="left:182px;top:287px" width="8" height="8" viewBox="0 0 8 8"><rect x="0.5" y="0.5" width="7" height="7" fill="#e4e8ee" stroke="#b4bac2"/><path d="M2 2.5 H6 M2 4 H6 M2 5.5 H6" stroke="#9aa2ac" stroke-width="0.6"/></svg>
<svg class="a" style="left:200px;top:287px" width="8" height="8" viewBox="0 0 8 8"><circle cx="3.5" cy="3.5" r="2.8" fill="#fff" stroke="#222" stroke-width="1.1"/><path d="M5.6 5.6 L8 8" stroke="#222" stroke-width="1.6"/><path d="M2 3.5 H5 M3.5 2 V5" stroke="#a01830" stroke-width="0.9"/></svg>
<svg class="a" style="left:211px;top:287px" width="8" height="8" viewBox="0 0 8 8"><circle cx="3.5" cy="3.5" r="2.8" fill="#fff" stroke="#222" stroke-width="1.1"/><path d="M5.6 5.6 L8 8" stroke="#222" stroke-width="1.6"/><path d="M2 3.5 H5" stroke="#222" stroke-width="0.9"/></svg>
<svg class="a" style="left:223px;top:286px" width="9" height="9" viewBox="0 0 9 9"><rect x="0.5" y="0.5" width="6" height="6" fill="#ccc" stroke="#666" stroke-width="0.8"/><path d="M4 4 L8.5 8.5" stroke="#222" stroke-width="1.5"/><rect x="1.5" y="1.5" width="3" height="3" fill="#333"/></svg>
<div class="a" style="left:234px;top:286px;width:1px;height:9px;background:#cfd2d6;box-shadow:1px 0 0 #fff"></div>
<svg class="a" style="left:238px;top:287px" width="9" height="8" viewBox="0 0 9 8"><path d="M1 5 A3.5 3.5 0 1 1 6 7.5" fill="none" stroke="#333" stroke-width="1"/><path d="M0 3 L1 5.5 L3 4" fill="none" stroke="#333" stroke-width="0.8"/></svg>
<svg class="a" style="left:251px;top:287px" width="8" height="7" viewBox="0 0 8 7"><rect x="0.5" y="1.5" width="7" height="5" fill="#fff" stroke="#333" stroke-width="0.9"/><rect x="0.5" y="1.5" width="7" height="1.5" fill="#333"/></svg>
<svg class="a" style="left:262px;top:287px" width="9" height="8" viewBox="0 0 9 8"><path d="M1 7 L7 1" stroke="#555" stroke-width="1"/><circle cx="1.5" cy="6.5" r="1.3" fill="none" stroke="#333" stroke-width="0.8"/></svg>
<svg class="a" style="left:274px;top:286px" width="8" height="9" viewBox="0 0 8 9"><path d="M1 1 L3 0 L7 6 L5 8.5 L0.5 8.5Z" fill="#22a030"/><path d="M1 1 L4 3" stroke="#222" stroke-width="0.8"/></svg>
<svg class="a" style="left:285px;top:286px" width="8" height="9" viewBox="0 0 8 9"><circle cx="4" cy="4" r="3.5" fill="#d090a0"/><path d="M1 8.5 L4 3 L7.5 8.5Z" fill="#20a030"/></svg>
<div class="a" style="left:296px;top:286px;width:1px;height:9px;background:#cfd2d6;box-shadow:1px 0 0 #fff"></div>
<svg class="a" style="left:300px;top:287px" width="8" height="8" viewBox="0 0 8 8"><rect x="0.5" y="0.5" width="7" height="7" fill="none" stroke="#d8d8d8"/><path d="M2 2 L6 6" stroke="#ccc"/></svg>
<svg class="a" style="left:311px;top:287px" width="8" height="8" viewBox="0 0 8 8"><path d="M0 2 H8 M0 4 H8 M0 6 H8" stroke="#c8c8c8" stroke-width="0.8"/></svg>
<div class="a" style="left:322px;top:286px;width:1px;height:9px;background:#cfd2d6;box-shadow:1px 0 0 #fff"></div>
<svg class="a" style="left:327px;top:287px" width="8" height="8" viewBox="0 0 8 8"><rect x="0.5" y="0.5" width="7" height="7" fill="#fff" stroke="#333" stroke-width="1"/></svg>
<div class="a" style="left:338px;top:286px;width:1px;height:9px;background:#cfd2d6;box-shadow:1px 0 0 #fff"></div>
<div class="a" style="left:341px;top:285px;width:12px;height:11px;background:#e4e8ec;border:1px solid #8a949e;border-radius:2px"></div>
<svg class="a" style="left:343px;top:287px" width="8" height="8" viewBox="0 0 8 8"><path d="M1 7 L6.5 1.5" stroke="#444" stroke-width="1.6"/><circle cx="1.8" cy="6.2" r="1.2" fill="none" stroke="#444" stroke-width="0.7"/><rect x="6" y="0" width="2" height="2" fill="#2a3a8a"/></svg>
<svg class="a" style="left:354px;top:287px" width="11" height="8" viewBox="0 0 11 8"><path d="M0.5 1 L7 7" stroke="#3050a0" stroke-width="1.2"/><path d="M0.5 7 L7 1" stroke="#b03080" stroke-width="1.2"/><path d="M8.5 3.5 H11 L9.8 5Z" fill="#222"/></svg>
<svg class="a" style="left:371px;top:286px" width="8" height="9" viewBox="0 0 8 9"><path d="M4 0.5 L7 3.5 H5 V8.5 H3 V3.5 H1Z" fill="#fff" stroke="#222" stroke-width="0.9"/><path d="M1 6 A3.5 3.5 0 0 0 7 6" fill="none" stroke="#222" stroke-width="0.8"/></svg>
<div class="a" style="left:381px;top:286px;width:1px;height:9px;background:#cfd2d6;box-shadow:1px 0 0 #fff"></div>
<div class="a" style="left:384px;top:285px;width:11px;height:11px;background:#e4e8ec;border:1px solid #8a949e;border-radius:2px"></div>
<svg class="a" style="left:386px;top:287px" width="8" height="8" viewBox="0 0 8 8"><path d="M1 0.5 V7 L3 5 L5 8 L6 7.5 L4.5 4.5 H7Z" fill="#fff" stroke="#222" stroke-width="0.8"/></svg>
<svg class="a" style="left:397px;top:286px" width="9" height="9" viewBox="0 0 9 9"><circle cx="3" cy="3" r="2.5" fill="#3a5aa0"/><circle cx="6" cy="5" r="2.5" fill="#c05070"/><path d="M0 8 L8 1" stroke="#333" stroke-width="0.8"/></svg>
<svg class="a" style="left:408px;top:287px" width="8" height="8" viewBox="0 0 8 8"><path d="M1 4 L4 1 M1 4 H7" stroke="#ddd" stroke-width="1"/></svg>
<svg class="a" style="left:420px;top:287px" width="8" height="8" viewBox="0 0 8 8"><path d="M7 4 L4 1 M7 4 H1" stroke="#ddd" stroke-width="1"/></svg>
<div class="a" style="left:431px;top:286px;width:1px;height:9px;background:#cfd2d6;box-shadow:1px 0 0 #fff"></div>
<div class="a" style="left:433px;top:285px;width:9px;height:11px;background:#e4e8ec;border:1px solid #8a949e;border-radius:2px"></div>
<svg class="a" style="left:434px;top:287px" width="8" height="9" viewBox="0 0 8 9"><rect x="0" y="0" width="2" height="9" fill="#c0c4c8"/><rect x="3" y="0" width="2" height="9" fill="#e03030"/><rect x="3" y="3" width="2" height="3" fill="#30b040"/><rect x="3" y="6" width="2" height="3" fill="#3050c0"/></svg>
<svg class="a" style="left:446px;top:287px" width="11" height="8" viewBox="0 0 11 8"><path d="M4 0.5 A3.5 3.5 0 0 0 0.5 4 A3.5 3.5 0 0 0 4 7.5 L7.5 4Z" fill="#e03030"/><path d="M0.5 4 A3.5 3.5 0 0 0 4 7.5 L4.5 4Z" fill="#30a040"/><path d="M2 6.5 A3.5 3.5 0 0 0 4 7.5 L4.5 4Z" fill="#3050c0"/><path d="M4 1 L7.5 3.5 L4 4Z" fill="#f0c020"/><path d="M9 4 L11 4 L10 5.5Z" fill="#222"/></svg>
<svg class="a" style="left:462px;top:287px" width="8" height="8" viewBox="0 0 8 8"><path d="M1 7 L7 1" stroke="#2a9a3a" stroke-width="3"/><path d="M4 4 L7 1" stroke="#2a4aa0" stroke-width="3"/><circle cx="2" cy="6" r="1.5" fill="#30b030"/></svg>
<div class="a" style="left:474px;top:286px;width:1px;height:9px;background:#cfd2d6;box-shadow:1px 0 0 #fff"></div>
<svg class="a" style="left:478px;top:287px" width="8" height="8" viewBox="0 0 8 8"><rect x="0" y="0" width="8" height="8" fill="#1a8aa8"/><circle cx="4" cy="3" r="1.8" fill="#0a3a5a"/><path d="M1 8 C2 5 6 5 7 8Z" fill="#0a3a5a"/></svg>
<svg class="a" style="left:490px;top:287px" width="9" height="8" viewBox="0 0 9 8"><path d="M3 0.5 H8.5 V5 H6 V7.5 H0.5 V3 H3Z" fill="#fff" stroke="#333" stroke-width="0.9"/><path d="M3 3 H6 V5" fill="none" stroke="#333" stroke-width="0.7"/></svg>
<svg class="a" style="left:502px;top:287px" width="9" height="8" viewBox="0 0 9 8"><rect x="3.5" y="0.5" width="5" height="4" fill="#fff" stroke="#333" stroke-width="0.9"/><rect x="0.5" y="3.5" width="5" height="4" fill="#fff" stroke="#333" stroke-width="0.9"/><rect x="5" y="1" width="3" height="1.5" fill="#333"/></svg>
<div class="a" style="left:516px;top:286px;width:1px;height:9px;background:#cfd2d6;box-shadow:1px 0 0 #fff"></div>
<svg class="a" style="left:781px;top:286px" width="8" height="8" viewBox="0 0 8 8"><rect x="0" y="0" width="8" height="8" fill="#f4f6f8"/><path d="M7.5 0.5 V7.5 H1" stroke="#555" stroke-width="0.6" fill="none"/><circle cx="3.8" cy="3.8" r="1.9" fill="#fff" stroke="#111" stroke-width="1.3"/></svg>
<svg class="a" style="left:790px;top:286px" width="7" height="9" viewBox="0 0 7 9"><rect x="0" y="0.5" width="7" height="8" fill="#c86060" stroke="#903030"/><path d="M1.5 2.5 L5.5 6.5 M5.5 2.5 L1.5 6.5" stroke="#f8d0d0" stroke-width="0.8"/></svg>
<svg class="a" style="left:779px;top:439px" width="8" height="8" viewBox="0 0 8 8"><rect x="0" y="0" width="8" height="8" fill="#f4f6f8"/><path d="M7.5 0.5 V7.5 H1" stroke="#555" stroke-width="0.6" fill="none"/><circle cx="3.8" cy="3.8" r="1.9" fill="#fff" stroke="#111" stroke-width="1.3"/></svg>
<svg class="a" style="left:789px;top:440px" width="8" height="8" viewBox="0 0 8 8"><rect x="0.5" y="0.5" width="7" height="7" fill="#e4e8ee" stroke="#b4bac2"/><path d="M2 2.5 H6 M2 4 H6 M2 5.5 H6" stroke="#9aa2ac" stroke-width="0.6"/></svg>

</div></body></html>
